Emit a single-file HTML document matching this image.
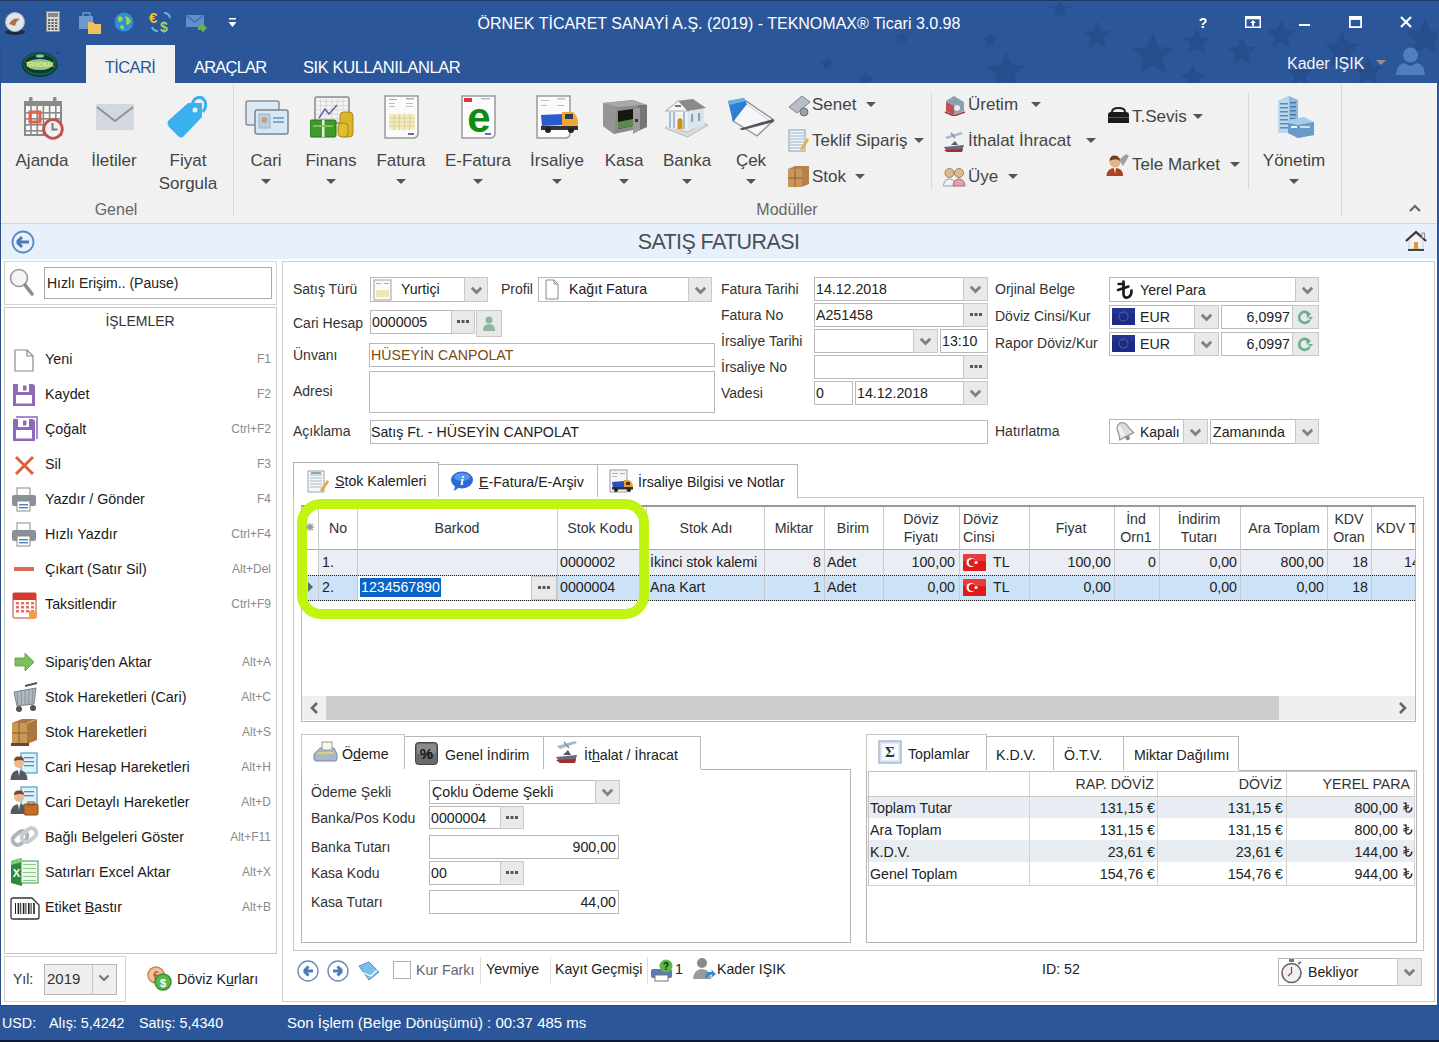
<!DOCTYPE html><html><head><meta charset="utf-8"><style>
html,body{margin:0;padding:0;width:1439px;height:1042px;overflow:hidden;background:#fff;font-family:"Liberation Sans",sans-serif;}
.r{position:absolute;box-sizing:content-box;}
.t{position:absolute;white-space:nowrap;line-height:20px;height:20px;}
</style></head><body>
<div class="r" style="left:0px;top:0px;width:1439px;height:83px;background:#2b579a;"></div>
<div class="r" style="left:0px;top:0px;width:1439px;height:1px;background:#1d3a66;"></div>
<svg class="r" style="left:800px;top:1px" width="637" height="82" viewBox="0 1 637 82"><polygon points="27.0,57.0 28.9,61.5 33.7,61.8 30.0,65.0 31.1,69.7 27.0,67.2 22.9,69.7 24.0,65.0 20.3,61.8 25.1,61.5" fill="#244e8c"/><polygon points="102.0,31.0 103.9,35.5 108.7,35.8 105.0,39.0 106.1,43.7 102.0,41.1 97.9,43.7 99.0,39.0 95.3,35.8 100.1,35.5" fill="#244e8c"/><polygon points="190.0,32.0 192.1,37.1 197.6,37.5 193.4,41.1 194.7,46.5 190.0,43.6 185.3,46.5 186.6,41.1 182.4,37.5 187.9,37.1" fill="#244e8c"/><polygon points="206.0,52.0 211.3,64.7 225.0,65.8 214.6,74.8 217.8,88.2 206.0,81.0 194.2,88.2 197.4,74.8 187.0,65.8 200.7,64.7" fill="#244e8c"/><polygon points="297.0,21.0 301.0,30.5 311.3,31.4 303.4,38.1 305.8,48.1 297.0,42.8 288.2,48.1 290.6,38.1 282.7,31.4 293.0,30.5" fill="#244e8c"/><polygon points="353.0,33.0 358.8,47.0 373.9,48.2 362.4,58.1 365.9,72.8 353.0,64.9 340.1,72.8 343.6,58.1 332.1,48.2 347.2,47.0" fill="#244e8c"/><polygon points="397.0,28.0 400.7,36.9 410.3,37.7 403.0,43.9 405.2,53.3 397.0,48.3 388.8,53.3 391.0,43.9 383.7,37.7 393.3,36.9" fill="#244e8c"/><polygon points="393.0,64.0 396.7,72.9 406.3,73.7 399.0,79.9 401.2,89.3 393.0,84.3 384.8,89.3 387.0,79.9 379.7,73.7 389.3,72.9" fill="#244e8c"/><polygon points="442.0,37.0 446.0,46.5 456.3,47.4 448.4,54.1 450.8,64.1 442.0,58.8 433.2,64.1 435.6,54.1 427.7,47.4 438.0,46.5" fill="#244e8c"/><polygon points="481.0,20.0 485.0,29.5 495.3,30.4 487.4,37.1 489.8,47.1 481.0,41.8 472.2,47.1 474.6,37.1 466.7,30.4 477.0,29.5" fill="#244e8c"/><polygon points="500.0,61.0 503.4,69.3 512.4,70.0 505.6,75.8 507.6,84.5 500.0,79.8 492.4,84.5 494.4,75.8 487.6,70.0 496.6,69.3" fill="#244e8c"/><polygon points="542.0,31.0 547.0,43.1 560.1,44.1 550.1,52.6 553.2,65.4 542.0,58.5 530.8,65.4 533.9,52.6 523.9,44.1 537.0,43.1" fill="#244e8c"/><polygon points="568.0,56.0 572.2,66.2 583.2,67.1 574.8,74.2 577.4,84.9 568.0,79.2 558.6,84.9 561.2,74.2 552.8,67.1 563.8,66.2" fill="#244e8c"/><polygon points="625.0,18.0 630.3,30.7 644.0,31.8 633.6,40.8 636.8,54.2 625.0,47.0 613.2,54.2 616.4,40.8 606.0,31.8 619.7,30.7" fill="#244e8c"/><polygon points="66.0,71.0 68.4,76.7 74.6,77.2 69.9,81.3 71.3,87.3 66.0,84.0 60.7,87.3 62.1,81.3 57.4,77.2 63.6,76.7" fill="#244e8c"/><polygon points="260.0,1.0 262.4,6.7 268.6,7.2 263.9,11.3 265.3,17.3 260.0,14.1 254.7,17.3 256.1,11.3 251.4,7.2 257.6,6.7" fill="#244e8c"/></svg>
<div class="r" style="left:0px;top:83px;width:1439px;height:140px;background:#f1f1f1;"></div>
<div class="r" style="left:0px;top:223px;width:1439px;height:1px;background:#d4d4d4;"></div>
<div class="r" style="left:0px;top:224px;width:1439px;height:35px;background:#e8f1fb;"></div>
<div class="r" style="left:0px;top:260px;width:1439px;height:745px;background:#ffffff;"></div>
<div class="r" style="left:0px;top:45px;width:1px;height:960px;background:#2b4f86;"></div>
<div class="r" style="left:1437px;top:45px;width:2px;height:960px;background:#2b579a;"></div>
<div class="r" style="left:0px;top:1005px;width:1439px;height:37px;background:#2b579a;"></div>
<div class="r" style="left:0px;top:1040px;width:1439px;height:2px;background:#0b1a36;"></div>
<div class="r" style="left:0px;top:1005px;width:1439px;height:1px;background:#2a4a78;"></div>
<div class="t" style="left:419px;width:600px;text-align:center;top:14.0px;font-size:16px;color:#ffffff;">ÖRNEK TİCARET SANAYİ A.Ş. (2019) - TEKNOMAX® Ticari 3.0.98</div>
<div class="r" style="left:86px;top:45px;width:89px;height:38px;background:#f1f1f1;"></div>
<div class="t" style="left:-170px;width:600px;text-align:center;top:57.0px;font-size:16.5px;color:#2b579a;letter-spacing:-0.6px;">TİCARİ</div>
<div class="t" style="left:194px;top:57.0px;font-size:16.5px;color:#ffffff;letter-spacing:-0.8px;">ARAÇLAR</div>
<div class="t" style="left:303px;top:57.0px;font-size:16.5px;color:#ffffff;letter-spacing:-0.4px;">SIK KULLANILANLAR</div>
<div class="t" style="left:1287px;top:53.5px;font-size:16px;color:#f4f4f4;">Kader IŞIK</div>
<div class="r" style="left:233px;top:84px;width:1px;height:132px;background:#d9d9d9;"></div>
<div class="r" style="left:1341px;top:84px;width:1px;height:132px;background:#d9d9d9;"></div>
<div class="r" style="left:931px;top:92px;width:1px;height:97px;background:#d9d9d9;"></div>
<div class="r" style="left:1248px;top:92px;width:1px;height:97px;background:#d9d9d9;"></div>
<div class="t" style="left:-258px;width:600px;text-align:center;top:151.0px;font-size:17px;color:#444444;">Ajanda</div>
<div class="t" style="left:-186px;width:600px;text-align:center;top:151.0px;font-size:17px;color:#444444;">İletiler</div>
<div class="t" style="left:-112px;width:600px;text-align:center;top:151.0px;font-size:17px;color:#444444;">Fiyat</div>
<div class="t" style="left:-34px;width:600px;text-align:center;top:151.0px;font-size:17px;color:#444444;">Cari</div>
<div class="t" style="left:31px;width:600px;text-align:center;top:151.0px;font-size:17px;color:#444444;">Finans</div>
<div class="t" style="left:101px;width:600px;text-align:center;top:151.0px;font-size:17px;color:#444444;">Fatura</div>
<div class="t" style="left:178px;width:600px;text-align:center;top:151.0px;font-size:17px;color:#444444;">E-Fatura</div>
<div class="t" style="left:257px;width:600px;text-align:center;top:151.0px;font-size:17px;color:#444444;">İrsaliye</div>
<div class="t" style="left:324px;width:600px;text-align:center;top:151.0px;font-size:17px;color:#444444;">Kasa</div>
<div class="t" style="left:387px;width:600px;text-align:center;top:151.0px;font-size:17px;color:#444444;">Banka</div>
<div class="t" style="left:451px;width:600px;text-align:center;top:151.0px;font-size:17px;color:#444444;">Çek</div>
<div class="t" style="left:994px;width:600px;text-align:center;top:151.0px;font-size:17px;color:#444444;">Yönetim</div>
<div class="t" style="left:-112px;width:600px;text-align:center;top:174.0px;font-size:17px;color:#444444;">Sorgula</div>
<div class="t" style="left:-184px;width:600px;text-align:center;top:200.0px;font-size:16px;color:#666666;">Genel</div>
<div class="t" style="left:487px;width:600px;text-align:center;top:200.0px;font-size:16px;color:#666666;">Modüller</div>
<div class="t" style="left:812px;top:95.0px;font-size:17px;color:#444444;">Senet</div>
<div class="t" style="left:812px;top:131.0px;font-size:17px;color:#444444;">Teklif Sipariş</div>
<div class="t" style="left:812px;top:167.0px;font-size:17px;color:#444444;">Stok</div>
<div class="t" style="left:968px;top:95.0px;font-size:17px;color:#444444;">Üretim</div>
<div class="t" style="left:968px;top:131.0px;font-size:17px;color:#444444;">İthalat İhracat</div>
<div class="t" style="left:968px;top:167.0px;font-size:17px;color:#444444;">Üye</div>
<div class="t" style="left:1132px;top:107.0px;font-size:17px;color:#444444;">T.Sevis</div>
<div class="t" style="left:1132px;top:155.0px;font-size:17px;color:#444444;">Tele Market</div>
<div class="t" style="left:418.5px;width:600px;text-align:center;top:232.0px;font-size:21.5px;color:#4a4f56;letter-spacing:-0.6px;">SATIŞ FATURASI</div>
<div class="r" style="left:4px;top:261px;width:271px;height:42px;background:#ffffff;border:1px solid #d5d5d5;"></div>
<div class="r" style="left:44px;top:267px;width:226px;height:30px;background:#ffffff;border:1px solid #a9a9a9;"></div>
<div class="t" style="left:47px;top:273.0px;font-size:14px;color:#222;">Hızlı Erişim.. (Pause)</div>
<div class="r" style="left:4px;top:307px;width:271px;height:645px;background:#ffffff;border:1px solid #c9c9c9;"></div>
<div class="t" style="left:-160px;width:600px;text-align:center;top:311.0px;font-size:14px;color:#333;">İŞLEMLER</div>
<div class="t" style="left:45px;top:349.0px;font-size:14.3px;color:#1a1a1a;">Yeni</div>
<div class="t" style="right:1168px;top:349.0px;font-size:12px;color:#8a8a8a;">F1</div>
<div class="t" style="left:45px;top:384.0px;font-size:14.3px;color:#1a1a1a;">Kaydet</div>
<div class="t" style="right:1168px;top:384.0px;font-size:12px;color:#8a8a8a;">F2</div>
<div class="t" style="left:45px;top:419.0px;font-size:14.3px;color:#1a1a1a;">Çoğalt</div>
<div class="t" style="right:1168px;top:419.0px;font-size:12px;color:#8a8a8a;">Ctrl+F2</div>
<div class="t" style="left:45px;top:454.0px;font-size:14.3px;color:#1a1a1a;">Sil</div>
<div class="t" style="right:1168px;top:454.0px;font-size:12px;color:#8a8a8a;">F3</div>
<div class="t" style="left:45px;top:489.0px;font-size:14.3px;color:#1a1a1a;">Yazdır / Gönder</div>
<div class="t" style="right:1168px;top:489.0px;font-size:12px;color:#8a8a8a;">F4</div>
<div class="t" style="left:45px;top:524.0px;font-size:14.3px;color:#1a1a1a;">Hızlı Yazdır</div>
<div class="t" style="right:1168px;top:524.0px;font-size:12px;color:#8a8a8a;">Ctrl+F4</div>
<div class="t" style="left:45px;top:559.0px;font-size:14.3px;color:#1a1a1a;">Çıkart (Satır Sil)</div>
<div class="t" style="right:1168px;top:559.0px;font-size:12px;color:#8a8a8a;">Alt+Del</div>
<div class="t" style="left:45px;top:594.0px;font-size:14.3px;color:#1a1a1a;">Taksitlendir</div>
<div class="t" style="right:1168px;top:594.0px;font-size:12px;color:#8a8a8a;">Ctrl+F9</div>
<div class="t" style="left:45px;top:652.0px;font-size:14.3px;color:#1a1a1a;">Sipariş&#x27;den Aktar</div>
<div class="t" style="right:1168px;top:652.0px;font-size:12px;color:#8a8a8a;">Alt+A</div>
<div class="t" style="left:45px;top:687.0px;font-size:14.3px;color:#1a1a1a;">Stok Hareketleri (Cari)</div>
<div class="t" style="right:1168px;top:687.0px;font-size:12px;color:#8a8a8a;">Alt+C</div>
<div class="t" style="left:45px;top:722.0px;font-size:14.3px;color:#1a1a1a;">Stok Hareketleri</div>
<div class="t" style="right:1168px;top:722.0px;font-size:12px;color:#8a8a8a;">Alt+S</div>
<div class="t" style="left:45px;top:757.0px;font-size:14.3px;color:#1a1a1a;">Cari Hesap Hareketleri</div>
<div class="t" style="right:1168px;top:757.0px;font-size:12px;color:#8a8a8a;">Alt+H</div>
<div class="t" style="left:45px;top:792.0px;font-size:14.3px;color:#1a1a1a;">Cari Detaylı Hareketler</div>
<div class="t" style="right:1168px;top:792.0px;font-size:12px;color:#8a8a8a;">Alt+D</div>
<div class="t" style="left:45px;top:827.0px;font-size:14.3px;color:#1a1a1a;">Bağlı Belgeleri Göster</div>
<div class="t" style="right:1168px;top:827.0px;font-size:12px;color:#8a8a8a;">Alt+F11</div>
<div class="t" style="left:45px;top:862.0px;font-size:14.3px;color:#1a1a1a;">Satırları Excel Aktar</div>
<div class="t" style="right:1168px;top:862.0px;font-size:12px;color:#8a8a8a;">Alt+X</div>
<div class="t" style="left:45px;top:897.0px;font-size:14.3px;color:#1a1a1a;">Etiket <u>B</u>astır</div>
<div class="t" style="right:1168px;top:897.0px;font-size:12px;color:#8a8a8a;">Alt+B</div>
<div class="r" style="left:4px;top:956px;width:120px;height:44px;background:#ffffff;border:1px solid #d5d5d5;"></div>
<div class="t" style="left:13px;top:969.0px;font-size:14px;color:#333;">Yıl:</div>
<div class="r" style="left:44px;top:964px;width:71px;height:29px;background:#eeeeee;border:1px solid #b5b5b5;"></div>
<div class="r" style="left:92px;top:965px;width:1px;height:29px;background:#c8c8c8;"></div>
<div class="t" style="left:47px;top:969.0px;font-size:15px;color:#333;">2019</div>
<div class="t" style="left:177px;top:969.0px;font-size:14.2px;color:#222;">Döviz K<u>u</u>rları</div>
<div class="r" style="left:282px;top:261px;width:1151px;height:739px;background:#ffffff;border:1px solid #d0d0d0;"></div>
<div class="t" style="left:293px;top:279.0px;font-size:14px;color:#333333;">Satış Türü</div>
<div class="t" style="left:293px;top:313.0px;font-size:14px;color:#333333;">Cari Hesap</div>
<div class="t" style="left:293px;top:345.0px;font-size:14px;color:#333333;">Ünvanı</div>
<div class="t" style="left:293px;top:381.0px;font-size:14px;color:#333333;">Adresi</div>
<div class="t" style="left:293px;top:421.0px;font-size:14px;color:#333333;">Açıklama</div>
<div class="t" style="left:501px;top:279.0px;font-size:14px;color:#333333;">Profil</div>
<div class="t" style="left:721px;top:279.0px;font-size:14px;color:#333333;">Fatura Tarihi</div>
<div class="t" style="left:721px;top:305.0px;font-size:14px;color:#333333;">Fatura No</div>
<div class="t" style="left:721px;top:331.0px;font-size:14px;color:#333333;">İrsaliye Tarihi</div>
<div class="t" style="left:721px;top:357.0px;font-size:14px;color:#333333;">İrsaliye No</div>
<div class="t" style="left:721px;top:383.0px;font-size:14px;color:#333333;">Vadesi</div>
<div class="t" style="left:995px;top:279.0px;font-size:14px;color:#333333;">Orjinal Belge</div>
<div class="t" style="left:995px;top:306.0px;font-size:14px;color:#333333;">Döviz Cinsi/Kur</div>
<div class="t" style="left:995px;top:333.0px;font-size:14px;color:#333333;">Rapor Döviz/Kur</div>
<div class="t" style="left:995px;top:421.0px;font-size:14px;color:#333333;">Hatırlatma</div>
<div class="r" style="left:370px;top:277px;width:116px;height:23px;background:#ffffff;border:1px solid #b9b9b9;"></div>
<div class="r" style="left:464px;top:277px;width:22px;height:23px;background:#e9e9e9;border:1px solid #c8c8c8;"></div>
<svg class="r" style="left:469.5px;top:285.5px" width="13" height="9" viewBox="0 0 13 9"><path d="M1.8 1.8 L6.5 6.5 L11.2 1.8" fill="none" stroke="#808080" stroke-width="2.8"/></svg>
<div class="t" style="left:401px;top:279.0px;font-size:14.2px;color:#222;">Yurtiçi</div>
<div class="r" style="left:538px;top:277px;width:172px;height:23px;background:#ffffff;border:1px solid #b9b9b9;"></div>
<div class="r" style="left:688px;top:277px;width:22px;height:23px;background:#e9e9e9;border:1px solid #c8c8c8;"></div>
<svg class="r" style="left:693.5px;top:285.5px" width="13" height="9" viewBox="0 0 13 9"><path d="M1.8 1.8 L6.5 6.5 L11.2 1.8" fill="none" stroke="#808080" stroke-width="2.8"/></svg>
<div class="t" style="left:569px;top:279.0px;font-size:14.2px;color:#222;">Kağıt Fatura</div>
<div class="r" style="left:370px;top:310px;width:103px;height:22px;background:#ffffff;border:1px solid #b9b9b9;"></div>
<div class="r" style="left:451px;top:310px;width:22px;height:22px;background:#e9e9e9;border:1px solid #c8c8c8;"></div>
<svg class="r" style="left:457.0px;top:320.0px" width="12" height="4" viewBox="0 0 12 4"><rect x="0" y="0" width="3" height="3" fill="#555"/><rect x="4.5" y="0" width="3" height="3" fill="#555"/><rect x="9" y="0" width="3" height="3" fill="#555"/></svg>
<div class="t" style="left:372px;top:312.0px;font-size:14.2px;color:#222;">0000005</div>
<div class="r" style="left:476px;top:310px;width:24px;height:25px;background:#e9e9e9;border:1px solid #c8c8c8;"></div>
<div class="r" style="left:369px;top:343px;width:344px;height:22px;background:#ffffff;border:1px solid #b9b9b9;"></div>
<div class="t" style="left:371px;top:345.0px;font-size:14.2px;color:#7a4a12;">HÜSEYİN CANPOLAT</div>
<div class="r" style="left:369px;top:371px;width:344px;height:40px;background:#ffffff;border:1px solid #b9b9b9;"></div>
<div class="r" style="left:370px;top:420px;width:616px;height:22px;background:#ffffff;border:1px solid #b9b9b9;"></div>
<div class="t" style="left:371px;top:422.0px;font-size:14.2px;color:#222;">Satış Ft. - HÜSEYİN CANPOLAT</div>
<div class="r" style="left:814px;top:277px;width:172px;height:22px;background:#ffffff;border:1px solid #b9b9b9;"></div>
<div class="r" style="left:963px;top:277px;width:23px;height:22px;background:#e9e9e9;border:1px solid #c8c8c8;"></div>
<svg class="r" style="left:969.0px;top:285.0px" width="13" height="9" viewBox="0 0 13 9"><path d="M1.8 1.8 L6.5 6.5 L11.2 1.8" fill="none" stroke="#808080" stroke-width="2.8"/></svg>
<div class="t" style="left:816px;top:279.0px;font-size:14.2px;color:#222;">14.12.2018</div>
<div class="r" style="left:814px;top:303px;width:172px;height:22px;background:#ffffff;border:1px solid #b9b9b9;"></div>
<div class="r" style="left:963px;top:303px;width:23px;height:22px;background:#e9e9e9;border:1px solid #c8c8c8;"></div>
<svg class="r" style="left:969.5px;top:313.0px" width="12" height="4" viewBox="0 0 12 4"><rect x="0" y="0" width="3" height="3" fill="#555"/><rect x="4.5" y="0" width="3" height="3" fill="#555"/><rect x="9" y="0" width="3" height="3" fill="#555"/></svg>
<div class="t" style="left:816px;top:305.0px;font-size:14.2px;color:#222;">A251458</div>
<div class="r" style="left:814px;top:329px;width:122px;height:22px;background:#ffffff;border:1px solid #b9b9b9;"></div>
<div class="r" style="left:913px;top:329px;width:23px;height:22px;background:#e9e9e9;border:1px solid #c8c8c8;"></div>
<svg class="r" style="left:919.0px;top:337.0px" width="13" height="9" viewBox="0 0 13 9"><path d="M1.8 1.8 L6.5 6.5 L11.2 1.8" fill="none" stroke="#808080" stroke-width="2.8"/></svg>
<div class="r" style="left:940px;top:329px;width:46px;height:22px;background:#ffffff;border:1px solid #b9b9b9;"></div>
<div class="t" style="left:942px;top:331.0px;font-size:14.2px;color:#222;">13:10</div>
<div class="r" style="left:814px;top:355px;width:172px;height:22px;background:#ffffff;border:1px solid #b9b9b9;"></div>
<div class="r" style="left:963px;top:355px;width:23px;height:22px;background:#e9e9e9;border:1px solid #c8c8c8;"></div>
<svg class="r" style="left:969.5px;top:365.0px" width="12" height="4" viewBox="0 0 12 4"><rect x="0" y="0" width="3" height="3" fill="#555"/><rect x="4.5" y="0" width="3" height="3" fill="#555"/><rect x="9" y="0" width="3" height="3" fill="#555"/></svg>
<div class="r" style="left:814px;top:381px;width:37px;height:22px;background:#ffffff;border:1px solid #b9b9b9;"></div>
<div class="t" style="left:816px;top:383.0px;font-size:14.2px;color:#222;">0</div>
<div class="r" style="left:855px;top:381px;width:131px;height:22px;background:#ffffff;border:1px solid #b9b9b9;"></div>
<div class="r" style="left:963px;top:381px;width:23px;height:22px;background:#e9e9e9;border:1px solid #c8c8c8;"></div>
<svg class="r" style="left:969.0px;top:389.0px" width="13" height="9" viewBox="0 0 13 9"><path d="M1.8 1.8 L6.5 6.5 L11.2 1.8" fill="none" stroke="#808080" stroke-width="2.8"/></svg>
<div class="t" style="left:857px;top:383.0px;font-size:14.2px;color:#222;">14.12.2018</div>
<div class="r" style="left:1109px;top:277px;width:208px;height:23px;background:#ffffff;border:1px solid #b9b9b9;"></div>
<div class="r" style="left:1295px;top:277px;width:22px;height:23px;background:#e9e9e9;border:1px solid #c8c8c8;"></div>
<svg class="r" style="left:1300.5px;top:285.5px" width="13" height="9" viewBox="0 0 13 9"><path d="M1.8 1.8 L6.5 6.5 L11.2 1.8" fill="none" stroke="#808080" stroke-width="2.8"/></svg>
<div class="t" style="left:1140px;top:280.0px;font-size:14.2px;color:#222;">Yerel Para</div>
<div class="r" style="left:1109px;top:305px;width:108px;height:22px;background:#ffffff;border:1px solid #b9b9b9;"></div>
<div class="r" style="left:1194px;top:305px;width:23px;height:22px;background:#e9e9e9;border:1px solid #c8c8c8;"></div>
<svg class="r" style="left:1200.0px;top:313.0px" width="13" height="9" viewBox="0 0 13 9"><path d="M1.8 1.8 L6.5 6.5 L11.2 1.8" fill="none" stroke="#808080" stroke-width="2.8"/></svg>
<div class="t" style="left:1140px;top:307.0px;font-size:14.2px;color:#222;">EUR</div>
<div class="r" style="left:1221px;top:305px;width:96px;height:22px;background:#ffffff;border:1px solid #b9b9b9;"></div>
<div class="r" style="left:1292px;top:305px;width:25px;height:22px;background:#e9e9e9;border:1px solid #c8c8c8;"></div>
<div class="t" style="right:149px;top:307.0px;font-size:14.2px;color:#222;">6,0997</div>
<div class="r" style="left:1109px;top:332px;width:108px;height:22px;background:#ffffff;border:1px solid #b9b9b9;"></div>
<div class="r" style="left:1194px;top:332px;width:23px;height:22px;background:#e9e9e9;border:1px solid #c8c8c8;"></div>
<svg class="r" style="left:1200.0px;top:340.0px" width="13" height="9" viewBox="0 0 13 9"><path d="M1.8 1.8 L6.5 6.5 L11.2 1.8" fill="none" stroke="#808080" stroke-width="2.8"/></svg>
<div class="t" style="left:1140px;top:334.0px;font-size:14.2px;color:#222;">EUR</div>
<div class="r" style="left:1221px;top:332px;width:96px;height:22px;background:#ffffff;border:1px solid #b9b9b9;"></div>
<div class="r" style="left:1292px;top:332px;width:25px;height:22px;background:#e9e9e9;border:1px solid #c8c8c8;"></div>
<div class="t" style="right:149px;top:334.0px;font-size:14.2px;color:#222;">6,0997</div>
<div class="r" style="left:1109px;top:419px;width:97px;height:23px;background:#ffffff;border:1px solid #b9b9b9;"></div>
<div class="r" style="left:1183px;top:419px;width:23px;height:23px;background:#e9e9e9;border:1px solid #c8c8c8;"></div>
<svg class="r" style="left:1189.0px;top:427.5px" width="13" height="9" viewBox="0 0 13 9"><path d="M1.8 1.8 L6.5 6.5 L11.2 1.8" fill="none" stroke="#808080" stroke-width="2.8"/></svg>
<div class="t" style="left:1140px;top:422.0px;font-size:14px;color:#222;">Kapalı</div>
<div class="r" style="left:1210px;top:419px;width:107px;height:23px;background:#ffffff;border:1px solid #b9b9b9;"></div>
<div class="r" style="left:1295px;top:419px;width:22px;height:23px;background:#e9e9e9;border:1px solid #c8c8c8;"></div>
<svg class="r" style="left:1300.5px;top:427.5px" width="13" height="9" viewBox="0 0 13 9"><path d="M1.8 1.8 L6.5 6.5 L11.2 1.8" fill="none" stroke="#808080" stroke-width="2.8"/></svg>
<div class="t" style="left:1213px;top:422.0px;font-size:14.2px;color:#222;">Zamanında</div>
<div class="r" style="left:293px;top:497px;width:1129px;height:452px;background:#ffffff;border:1px solid #c6c6c6;"></div>
<div class="r" style="left:293px;top:462px;width:144px;height:34px;background:#ffffff;border:1px solid #b0b0b0;border-bottom:none;height:35px;"></div>
<div class="r" style="left:438px;top:464px;width:158px;height:32px;background:#ffffff;border:1px solid #b8b8b8;"></div>
<div class="r" style="left:597px;top:464px;width:199px;height:32px;background:#ffffff;border:1px solid #b8b8b8;"></div>
<div class="r" style="left:294px;top:497px;width:503px;height:1px;background:#ffffff;"></div>
<div class="r" style="left:294px;top:496px;width:144px;height:3px;background:#ffffff;"></div>
<div class="t" style="left:335px;top:471.0px;font-size:14.2px;color:#222;"><u>S</u>tok Kalemleri</div>
<div class="t" style="left:479px;top:472.0px;font-size:14.2px;color:#222;"><u>E</u>-Fatura/E-Arşiv</div>
<div class="t" style="left:638px;top:472.0px;font-size:14.2px;color:#222;">İrsaliye Bilgisi ve Notlar</div>
<div class="r" style="left:301px;top:505px;width:1113px;height:214px;background:#ffffff;border:1px solid #b8b8b8;border-top:2px solid #9a9a9a;"></div>
<div class="r" style="left:318px;top:549px;width:1097px;height:26px;background:#eaedf3;"></div>
<div class="r" style="left:302px;top:575px;width:1113px;height:25px;background:#cce3f7;"></div>
<div class="r" style="left:302px;top:549px;width:1113px;height:1px;background:#a9a9a9;"></div>
<div class="r" style="left:318px;top:507px;width:1px;height:93px;background:#c9c9c9;"></div>
<div class="r" style="left:357px;top:507px;width:1px;height:93px;background:#c9c9c9;"></div>
<div class="r" style="left:557px;top:507px;width:1px;height:93px;background:#c9c9c9;"></div>
<div class="r" style="left:646px;top:507px;width:1px;height:93px;background:#c9c9c9;"></div>
<div class="r" style="left:764px;top:507px;width:1px;height:93px;background:#c9c9c9;"></div>
<div class="r" style="left:824px;top:507px;width:1px;height:93px;background:#c9c9c9;"></div>
<div class="r" style="left:883px;top:507px;width:1px;height:93px;background:#c9c9c9;"></div>
<div class="r" style="left:959px;top:507px;width:1px;height:93px;background:#c9c9c9;"></div>
<div class="r" style="left:1029px;top:507px;width:1px;height:93px;background:#c9c9c9;"></div>
<div class="r" style="left:1114px;top:507px;width:1px;height:93px;background:#c9c9c9;"></div>
<div class="r" style="left:1159px;top:507px;width:1px;height:93px;background:#c9c9c9;"></div>
<div class="r" style="left:1240px;top:507px;width:1px;height:93px;background:#c9c9c9;"></div>
<div class="r" style="left:1327px;top:507px;width:1px;height:93px;background:#c9c9c9;"></div>
<div class="r" style="left:1371px;top:507px;width:1px;height:93px;background:#c9c9c9;"></div>
<div class="r" style="left:302px;top:600px;width:1113px;height:1px;background:#9a9a9a;background:repeating-linear-gradient(90deg,#222 0 1px,#c8dcf0 1px 2px);"></div>
<div class="r" style="left:302px;top:575px;width:1113px;height:1px;background:#9a9a9a;background:repeating-linear-gradient(90deg,#222 0 1px,#c8dcf0 1px 2px);"></div>
<div class="t" style="left:38px;width:600px;text-align:center;top:518.0px;font-size:14.2px;color:#333;">No</div>
<div class="t" style="left:157px;width:600px;text-align:center;top:518.0px;font-size:14.2px;color:#333;">Barkod</div>
<div class="t" style="left:300px;width:600px;text-align:center;top:518.0px;font-size:14.2px;color:#333;">Stok Kodu</div>
<div class="t" style="left:406px;width:600px;text-align:center;top:518.0px;font-size:14.2px;color:#333;">Stok Adı</div>
<div class="t" style="left:494px;width:600px;text-align:center;top:518.0px;font-size:14.2px;color:#333;">Miktar</div>
<div class="t" style="left:553px;width:600px;text-align:center;top:518.0px;font-size:14.2px;color:#333;">Birim</div>
<div class="t" style="left:771px;width:600px;text-align:center;top:518.0px;font-size:14.2px;color:#333;">Fiyat</div>
<div class="t" style="left:984px;width:600px;text-align:center;top:518.0px;font-size:14.2px;color:#333;">Ara Toplam</div>
<div class="t" style="left:621px;width:600px;text-align:center;top:509.0px;font-size:14.2px;color:#333;">Döviz</div>
<div class="t" style="left:621px;width:600px;text-align:center;top:527.0px;font-size:14.2px;color:#333;">Fiyatı</div>
<div class="t" style="left:836px;width:600px;text-align:center;top:509.0px;font-size:14.2px;color:#333;">İnd</div>
<div class="t" style="left:836px;width:600px;text-align:center;top:527.0px;font-size:14.2px;color:#333;">Orn1</div>
<div class="t" style="left:899px;width:600px;text-align:center;top:509.0px;font-size:14.2px;color:#333;">İndirim</div>
<div class="t" style="left:899px;width:600px;text-align:center;top:527.0px;font-size:14.2px;color:#333;">Tutarı</div>
<div class="t" style="left:1049px;width:600px;text-align:center;top:509.0px;font-size:14.2px;color:#333;">KDV</div>
<div class="t" style="left:1049px;width:600px;text-align:center;top:527.0px;font-size:14.2px;color:#333;">Oran</div>
<div class="t" style="left:963px;top:509.0px;font-size:14.2px;color:#333;">Döviz</div>
<div class="t" style="left:963px;top:527.0px;font-size:14.2px;color:#333;">Cinsi</div>
<div class="r" style="left:1372px;top:507px;width:43px;height:93px;overflow:hidden"><div class="t" style="left:4px;top:11px;font-size:14.2px;color:#333">KDV T</div><div class="t" style="left:32px;top:45px;font-size:14.2px;color:#222">14</div></div>
<div class="t" style="left:322px;top:552.0px;font-size:14.2px;color:#222;">1.</div>
<div class="t" style="left:560px;top:552.0px;font-size:14.2px;color:#222;">0000002</div>
<div class="t" style="left:650px;top:552.0px;font-size:14.2px;color:#222;">İkinci stok kalemi</div>
<div class="t" style="right:618px;top:552.0px;font-size:14.2px;color:#222;">8</div>
<div class="t" style="left:827px;top:552.0px;font-size:14.2px;color:#222;">Adet</div>
<div class="t" style="right:484px;top:552.0px;font-size:14.2px;color:#222;">100,00</div>
<div class="t" style="left:993px;top:552.0px;font-size:14.2px;color:#222;">TL</div>
<div class="t" style="right:328px;top:552.0px;font-size:14.2px;color:#222;">100,00</div>
<div class="t" style="right:283px;top:552.0px;font-size:14.2px;color:#222;">0</div>
<div class="t" style="right:202px;top:552.0px;font-size:14.2px;color:#222;">0,00</div>
<div class="t" style="right:115px;top:552.0px;font-size:14.2px;color:#222;">800,00</div>
<div class="t" style="right:71px;top:552.0px;font-size:14.2px;color:#222;">18</div>
<div class="t" style="left:322px;top:577.0px;font-size:14.2px;color:#222;">2.</div>
<div class="t" style="left:560px;top:577.0px;font-size:14.2px;color:#222;">0000004</div>
<div class="t" style="left:650px;top:577.0px;font-size:14.2px;color:#222;">Ana Kart</div>
<div class="t" style="right:618px;top:577.0px;font-size:14.2px;color:#222;">1</div>
<div class="t" style="left:827px;top:577.0px;font-size:14.2px;color:#222;">Adet</div>
<div class="t" style="right:484px;top:577.0px;font-size:14.2px;color:#222;">0,00</div>
<div class="t" style="left:993px;top:577.0px;font-size:14.2px;color:#222;">TL</div>
<div class="t" style="right:328px;top:577.0px;font-size:14.2px;color:#222;">0,00</div>
<div class="t" style="right:283px;top:577.0px;font-size:14.2px;color:#222;"></div>
<div class="t" style="right:202px;top:577.0px;font-size:14.2px;color:#222;">0,00</div>
<div class="t" style="right:115px;top:577.0px;font-size:14.2px;color:#222;">0,00</div>
<div class="t" style="right:71px;top:577.0px;font-size:14.2px;color:#222;">18</div>
<div class="r" style="left:358px;top:576px;width:199px;height:24px;background:#ffffff;"></div>
<div class="r" style="left:531px;top:576px;width:24px;height:22px;background:#e9e9e9;border:1px solid #c8c8c8;"></div>
<svg class="r" style="left:538.0px;top:586.0px" width="12" height="4" viewBox="0 0 12 4"><rect x="0" y="0" width="3" height="3" fill="#555"/><rect x="4.5" y="0" width="3" height="3" fill="#555"/><rect x="9" y="0" width="3" height="3" fill="#555"/></svg>
<div class="r" style="left:360px;top:578px;width:81px;height:19px;background:#0a64c8;"></div>
<div class="t" style="left:361px;top:577.0px;font-size:14.2px;color:#ffffff;">1234567890</div>
<div class="r" style="left:302px;top:696px;width:1113px;height:24px;background:#efefef;"></div>
<div class="r" style="left:326px;top:696px;width:953px;height:24px;background:#cdcdcd;"></div>
<svg class="r" style="left:309px;top:702px" width="10" height="12" viewBox="0 0 10 12"><path d="M8 1 L3 6 L8 11" fill="none" stroke="#666" stroke-width="2.6"/></svg>
<svg class="r" style="left:1398px;top:702px" width="10" height="12" viewBox="0 0 10 12"><path d="M2 1 L7 6 L2 11" fill="none" stroke="#666" stroke-width="2.6"/></svg>
<div class="r" style="left:297px;top:499px;width:332px;height:100px;border:10px solid #c0f511;border-radius:24px;"></div>
<div class="r" style="left:301px;top:769px;width:548px;height:172px;background:#ffffff;border:1px solid #b4b4b4;"></div>
<div class="r" style="left:301px;top:734px;width:102px;height:34px;background:#ffffff;border:1px solid #c6c6c6;border-bottom:none;height:35px;"></div>
<div class="r" style="left:404px;top:736px;width:138px;height:32px;background:#ffffff;border:1px solid #b8b8b8;"></div>
<div class="r" style="left:543px;top:736px;width:156px;height:32px;background:#ffffff;border:1px solid #b8b8b8;"></div>
<div class="r" style="left:302px;top:769px;width:399px;height:1px;background:#ffffff;"></div>
<div class="t" style="left:342px;top:744.0px;font-size:14.2px;color:#222;">Ö<u>d</u>eme</div>
<div class="t" style="left:445px;top:745.0px;font-size:14.2px;color:#222;">Genel İndirim</div>
<div class="t" style="left:584px;top:745.0px;font-size:14.2px;color:#222;">İt<u>h</u>alat / İhracat</div>
<div class="t" style="left:311px;top:782.0px;font-size:14px;color:#333333;">Ödeme Şekli</div>
<div class="t" style="left:311px;top:808.0px;font-size:14px;color:#333333;">Banka/Pos Kodu</div>
<div class="t" style="left:311px;top:837.0px;font-size:14px;color:#333333;">Banka Tutarı</div>
<div class="t" style="left:311px;top:863.0px;font-size:14px;color:#333333;">Kasa Kodu</div>
<div class="t" style="left:311px;top:892.0px;font-size:14px;color:#333333;">Kasa Tutarı</div>
<div class="r" style="left:429px;top:780px;width:189px;height:22px;background:#ffffff;border:1px solid #b9b9b9;"></div>
<div class="r" style="left:595px;top:780px;width:23px;height:22px;background:#e9e9e9;border:1px solid #c8c8c8;"></div>
<svg class="r" style="left:601.0px;top:788.0px" width="13" height="9" viewBox="0 0 13 9"><path d="M1.8 1.8 L6.5 6.5 L11.2 1.8" fill="none" stroke="#808080" stroke-width="2.8"/></svg>
<div class="t" style="left:432px;top:782.0px;font-size:14.2px;color:#222;">Çoklu Ödeme Şekli</div>
<div class="r" style="left:429px;top:806px;width:93px;height:21px;background:#ffffff;border:1px solid #b9b9b9;"></div>
<div class="r" style="left:500px;top:806px;width:22px;height:21px;background:#e9e9e9;border:1px solid #c8c8c8;"></div>
<svg class="r" style="left:506.0px;top:815.5px" width="12" height="4" viewBox="0 0 12 4"><rect x="0" y="0" width="3" height="3" fill="#555"/><rect x="4.5" y="0" width="3" height="3" fill="#555"/><rect x="9" y="0" width="3" height="3" fill="#555"/></svg>
<div class="t" style="left:431px;top:808.0px;font-size:14.2px;color:#222;">0000004</div>
<div class="r" style="left:429px;top:835px;width:188px;height:22px;background:#ffffff;border:1px solid #b9b9b9;"></div>
<div class="t" style="right:823px;top:837.0px;font-size:14.2px;color:#222;">900,00</div>
<div class="r" style="left:429px;top:861px;width:93px;height:22px;background:#ffffff;border:1px solid #b9b9b9;"></div>
<div class="r" style="left:500px;top:861px;width:22px;height:22px;background:#e9e9e9;border:1px solid #c8c8c8;"></div>
<svg class="r" style="left:506.0px;top:871.0px" width="12" height="4" viewBox="0 0 12 4"><rect x="0" y="0" width="3" height="3" fill="#555"/><rect x="4.5" y="0" width="3" height="3" fill="#555"/><rect x="9" y="0" width="3" height="3" fill="#555"/></svg>
<div class="t" style="left:431px;top:863.0px;font-size:14.2px;color:#222;">00</div>
<div class="r" style="left:429px;top:890px;width:188px;height:22px;background:#ffffff;border:1px solid #b9b9b9;"></div>
<div class="t" style="right:823px;top:892.0px;font-size:14.2px;color:#222;">44,00</div>
<div class="r" style="left:866px;top:770px;width:549px;height:171px;background:#ffffff;border:1px solid #b4b4b4;"></div>
<div class="r" style="left:866px;top:734px;width:119px;height:35px;background:#ffffff;border:1px solid #c6c6c6;border-bottom:none;height:36px;"></div>
<div class="r" style="left:986px;top:736px;width:66px;height:33px;background:#ffffff;border:1px solid #b8b8b8;"></div>
<div class="r" style="left:1053px;top:736px;width:69px;height:33px;background:#ffffff;border:1px solid #b8b8b8;"></div>
<div class="r" style="left:1123px;top:736px;width:114px;height:33px;background:#ffffff;border:1px solid #b8b8b8;"></div>
<div class="r" style="left:867px;top:770px;width:372px;height:1px;background:#ffffff;"></div>
<div class="t" style="left:908px;top:744.0px;font-size:14.2px;color:#222;">Toplamlar</div>
<div class="t" style="left:996px;top:745.0px;font-size:14.2px;color:#222;">K.D.V.</div>
<div class="t" style="left:1064px;top:745.0px;font-size:14.2px;color:#222;">Ö.T.V.</div>
<div class="t" style="left:1134px;top:745.0px;font-size:14.2px;color:#222;">Miktar Dağılımı</div>
<div class="r" style="left:868px;top:771px;width:547px;height:26px;background:#ffffff;"></div>
<div class="r" style="left:867px;top:796px;width:548px;height:1px;background:#c9c9c9;"></div>
<div class="r" style="left:867px;top:797px;width:548px;height:21px;background:#e8ecf3;"></div>
<div class="r" style="left:867px;top:840px;width:548px;height:22px;background:#e8ecf3;"></div>
<div class="r" style="left:867px;top:885px;width:548px;height:1px;background:#cfcfcf;"></div>
<div class="r" style="left:1029px;top:771px;width:1px;height:114px;background:#d2d2d2;"></div>
<div class="r" style="left:1157px;top:771px;width:1px;height:114px;background:#d2d2d2;"></div>
<div class="r" style="left:1286px;top:771px;width:1px;height:114px;background:#d2d2d2;"></div>
<div class="r" style="left:1414px;top:771px;width:1px;height:114px;background:#d2d2d2;"></div>
<div class="r" style="left:868px;top:771px;width:1px;height:115px;background:#c4c4c4;"></div>
<div class="r" style="left:868px;top:771px;width:547px;height:1px;background:#c4c4c4;"></div>
<div class="t" style="right:285px;top:774.0px;font-size:14.2px;color:#333;">RAP. DÖVİZ</div>
<div class="t" style="right:157px;top:774.0px;font-size:14.2px;color:#333;">DÖVİZ</div>
<div class="t" style="right:29px;top:774.0px;font-size:14.2px;color:#333;">YEREL PARA</div>
<div class="t" style="left:870px;top:798.0px;font-size:14.2px;color:#222;">Toplam Tutar</div>
<div class="t" style="right:284px;top:798.0px;font-size:14.2px;color:#222;">131,15 €</div>
<div class="t" style="right:156px;top:798.0px;font-size:14.2px;color:#222;">131,15 €</div>
<div class="t" style="right:41px;top:798.0px;font-size:14.2px;color:#222;">800,00</div>
<svg class="r" style="left:1401.5px;top:801px" width="11" height="13" viewBox="0 0 11 13"><path d="M4 1.5 V9 Q4 11.5 6.8 11 Q9.8 10.2 9.8 6.5" fill="none" stroke="#2a2a2a" stroke-width="1.4"/><path d="M1.5 2.2 H4 M1.3 6.3 L7 4.3 M1.3 8.3 L7 6.3" fill="none" stroke="#2a2a2a" stroke-width="1.2"/></svg>
<div class="t" style="left:870px;top:820.0px;font-size:14.2px;color:#222;">Ara Toplam</div>
<div class="t" style="right:284px;top:820.0px;font-size:14.2px;color:#222;">131,15 €</div>
<div class="t" style="right:156px;top:820.0px;font-size:14.2px;color:#222;">131,15 €</div>
<div class="t" style="right:41px;top:820.0px;font-size:14.2px;color:#222;">800,00</div>
<svg class="r" style="left:1401.5px;top:823px" width="11" height="13" viewBox="0 0 11 13"><path d="M4 1.5 V9 Q4 11.5 6.8 11 Q9.8 10.2 9.8 6.5" fill="none" stroke="#2a2a2a" stroke-width="1.4"/><path d="M1.5 2.2 H4 M1.3 6.3 L7 4.3 M1.3 8.3 L7 6.3" fill="none" stroke="#2a2a2a" stroke-width="1.2"/></svg>
<div class="t" style="left:870px;top:842.0px;font-size:14.2px;color:#222;">K.D.V.</div>
<div class="t" style="right:284px;top:842.0px;font-size:14.2px;color:#222;">23,61 €</div>
<div class="t" style="right:156px;top:842.0px;font-size:14.2px;color:#222;">23,61 €</div>
<div class="t" style="right:41px;top:842.0px;font-size:14.2px;color:#222;">144,00</div>
<svg class="r" style="left:1401.5px;top:845px" width="11" height="13" viewBox="0 0 11 13"><path d="M4 1.5 V9 Q4 11.5 6.8 11 Q9.8 10.2 9.8 6.5" fill="none" stroke="#2a2a2a" stroke-width="1.4"/><path d="M1.5 2.2 H4 M1.3 6.3 L7 4.3 M1.3 8.3 L7 6.3" fill="none" stroke="#2a2a2a" stroke-width="1.2"/></svg>
<div class="t" style="left:870px;top:864.0px;font-size:14.2px;color:#222;">Genel Toplam</div>
<div class="t" style="right:284px;top:864.0px;font-size:14.2px;color:#222;">154,76 €</div>
<div class="t" style="right:156px;top:864.0px;font-size:14.2px;color:#222;">154,76 €</div>
<div class="t" style="right:41px;top:864.0px;font-size:14.2px;color:#222;">944,00</div>
<svg class="r" style="left:1401.5px;top:867px" width="11" height="13" viewBox="0 0 11 13"><path d="M4 1.5 V9 Q4 11.5 6.8 11 Q9.8 10.2 9.8 6.5" fill="none" stroke="#2a2a2a" stroke-width="1.4"/><path d="M1.5 2.2 H4 M1.3 6.3 L7 4.3 M1.3 8.3 L7 6.3" fill="none" stroke="#2a2a2a" stroke-width="1.2"/></svg>
<div class="r" style="left:393px;top:961px;width:16px;height:16px;background:#ffffff;border:1px solid #b0b0b0;"></div>
<div class="t" style="left:416px;top:960.0px;font-size:14.2px;color:#666;">Kur Farkı</div>
<div class="r" style="left:480px;top:957px;width:1px;height:27px;background:#dddddd;"></div>
<div class="t" style="left:486px;top:959.0px;font-size:14.2px;color:#222;">Yevmiye</div>
<div class="r" style="left:550px;top:957px;width:1px;height:27px;background:#dddddd;"></div>
<div class="t" style="left:555px;top:959.0px;font-size:14.2px;color:#222;">Kayıt Geçmişi</div>
<div class="r" style="left:647px;top:957px;width:1px;height:27px;background:#dddddd;"></div>
<div class="t" style="left:675px;top:959.0px;font-size:14.2px;color:#222;">1</div>
<div class="t" style="left:717px;top:959.0px;font-size:14.2px;color:#222;">Kader IŞIK</div>
<div class="t" style="left:1042px;top:959.0px;font-size:14.2px;color:#222;">ID: 52</div>
<div class="r" style="left:1278px;top:958px;width:142px;height:26px;background:#ffffff;border:1px solid #b9b9b9;"></div>
<div class="r" style="left:1397px;top:958px;width:23px;height:26px;background:#e9e9e9;border:1px solid #c8c8c8;"></div>
<svg class="r" style="left:1403.0px;top:968.0px" width="13" height="9" viewBox="0 0 13 9"><path d="M1.8 1.8 L6.5 6.5 L11.2 1.8" fill="none" stroke="#808080" stroke-width="2.8"/></svg>
<div class="t" style="left:1308px;top:962.0px;font-size:14.2px;color:#222;">Bekliyor</div>
<div class="t" style="left:2px;top:1013.0px;font-size:14.3px;color:#ffffff;">USD:</div>
<div class="t" style="left:49px;top:1013.0px;font-size:14.3px;color:#ffffff;">Alış: 5,4242</div>
<div class="t" style="left:139px;top:1013.0px;font-size:14.3px;color:#ffffff;">Satış: 5,4340</div>
<div class="t" style="left:287px;top:1013.0px;font-size:15px;color:#ffffff;">Son İşlem (Belge Dönüşümü) : 00:37 485 ms</div>
<svg class="r" style="left:4px;top:11px" width="22" height="24" viewBox="0 0 22 24"><ellipse cx="11" cy="21" rx="10" ry="3" fill="#1b2b44"/><circle cx="11" cy="11" r="9.5" fill="#dfe8e8"/><circle cx="11" cy="11" r="9.5" fill="none" stroke="#9fb7bd" stroke-width="1"/><path d="M5 13 Q9 6 16 8 Q12 10 11 15 Z" fill="#b06e4a"/></svg>
<svg class="r" style="left:46px;top:11px" width="14" height="21" viewBox="0 0 14 21"><rect x="0.5" y="0.5" width="13" height="20" fill="#d8d8d8" stroke="#8d8d8d"/><rect x="2" y="2" width="10" height="4" fill="#888"/><rect x="2.0" y="8" width="2.3" height="2" fill="#666"/><rect x="2.0" y="11" width="2.3" height="2" fill="#666"/><rect x="2.0" y="14" width="2.3" height="2" fill="#666"/><rect x="2.0" y="17" width="2.3" height="2" fill="#666"/><rect x="5.5" y="8" width="2.3" height="2" fill="#666"/><rect x="5.5" y="11" width="2.3" height="2" fill="#666"/><rect x="5.5" y="14" width="2.3" height="2" fill="#666"/><rect x="5.5" y="17" width="2.3" height="2" fill="#666"/><rect x="9.0" y="8" width="2.3" height="2" fill="#666"/><rect x="9.0" y="11" width="2.3" height="2" fill="#666"/><rect x="9.0" y="14" width="2.3" height="2" fill="#666"/><rect x="9.0" y="17" width="2.3" height="2" fill="#666"/></svg>
<svg class="r" style="left:79px;top:12px" width="22" height="22" viewBox="0 0 22 22"><rect x="0" y="4" width="14" height="13" rx="1" fill="#6a9bd1"/><rect x="4" y="1" width="7" height="4" fill="none" stroke="#6a9bd1" stroke-width="1.5"/><path d="M9 10 h5 l2 2 h6 v10 h-13 z" fill="#f0c060"/></svg>
<svg class="r" style="left:114px;top:12px" width="20" height="20" viewBox="0 0 20 20"><circle cx="10" cy="10" r="9.5" fill="#2f8fd6"/><path d="M4 5 Q8 3 9 7 Q7 11 5 10 Q3 8 4 5Z M11 4 Q16 5 17 10 Q14 14 12 12 Q13 8 11 4Z M7 13 Q10 13 10 17 Q7 18 6 15Z" fill="#a8cf45"/></svg>
<svg class="r" style="left:149px;top:10px" width="24" height="24" viewBox="0 0 24 24"><text x="0" y="13" font-family="Liberation Sans" font-weight="bold" font-size="15" fill="#f2c12e">€</text><text x="11" y="22" font-family="Liberation Sans" font-weight="bold" font-size="14" fill="#9fd36a">$</text><path d="M15 3 q5 0 6 5" fill="none" stroke="#6fb3e8" stroke-width="2"/><path d="M3 17 q1 4 6 4" fill="none" stroke="#6fb3e8" stroke-width="2"/></svg>
<svg class="r" style="left:186px;top:14px" width="22" height="18" viewBox="0 0 22 18"><rect x="0" y="1" width="18" height="12" fill="#5f8fcf"/><path d="M0 1 L9 8 L18 1" fill="none" stroke="#3f6fb0" stroke-width="1.5"/><path d="M12 12 h4 v-3 l5 5 l-5 5 v-3 h-4z" fill="#6ab04c"/></svg>
<svg class="r" style="left:228px;top:18px" width="9" height="10" viewBox="0 0 9 10"><rect x="1" y="0" width="7" height="1.5" fill="#fff"/><path d="M0.5 4 h8 l-4 5z" fill="#fff"/></svg>
<svg class="r" style="left:20px;top:50px" width="42" height="30" viewBox="0 0 42 30"><ellipse cx="19.7" cy="14.5" rx="18" ry="12.5" fill="#0b2f4a"/><ellipse cx="19.7" cy="14" rx="17" ry="11.5" fill="#136030"/><ellipse cx="19.7" cy="14" rx="15" ry="9.5" fill="#0d3a36"/><ellipse cx="19.7" cy="14.5" rx="13" ry="5.5" fill="#8fc4a0"/><text x="19.7" y="17" text-anchor="middle" font-family="Liberation Sans" font-size="6.5" font-weight="bold" fill="#e4f060" textLength="28" lengthAdjust="spacingAndGlyphs">TEKNOMAX</text><ellipse cx="20" cy="6" rx="4" ry="1.5" fill="#dfe" opacity="0.7"/><circle cx="38" cy="3" r="1" fill="#1a3a6a"/></svg>
<svg class="r" style="left:1197px;top:15px" width="12" height="14" viewBox="0 0 12 14"><text x="6" y="13" text-anchor="middle" font-family="Liberation Sans" font-weight="bold" font-size="14" fill="#fff">?</text></svg>
<svg class="r" style="left:1245px;top:16px" width="16" height="12" viewBox="0 0 16 12"><rect x="0.75" y="0.75" width="14.5" height="10.5" fill="none" stroke="#fff" stroke-width="1.5"/><rect x="0.75" y="0.75" width="14.5" height="2.5" fill="#fff"/><path d="M8 4 l-3 3 h2 v3 h2 v-3 h2z" fill="#fff"/></svg>
<div class="r" style="left:1299px;top:24px;width:11px;height:2px;background:#ffffff;"></div>
<svg class="r" style="left:1349px;top:16px" width="13" height="12" viewBox="0 0 13 12"><rect x="0.9" y="0.9" width="11.2" height="10.2" fill="none" stroke="#fff" stroke-width="1.8"/><rect x="0.9" y="0.9" width="11.2" height="3" fill="#fff"/></svg>
<svg class="r" style="left:1400px;top:16px" width="12" height="12" viewBox="0 0 12 12"><path d="M1 1 L11 11 M11 1 L1 11" stroke="#fff" stroke-width="2.2"/></svg>
<svg class="r" style="left:1376px;top:60px" width="10" height="6" viewBox="0 0 10 6"><path d="M0 0 h10 l-5 5z" fill="#9a8f86"/></svg>
<svg class="r" style="left:1395px;top:45px" width="31" height="31" viewBox="0 0 31 31"><circle cx="15.5" cy="10" r="7.5" fill="#4f7fc0"/><path d="M1 30 Q2 19 9 18 L15.5 21 L22 18 Q29 19 30 30z" fill="#4f7fc0"/></svg>
<svg class="r" style="left:23px;top:97px" width="43" height="44" viewBox="0 0 43 44"><rect x="2" y="5" width="36" height="33" fill="#f8f8f8" stroke="#8a8a8a" stroke-width="2"/><rect x="1" y="4" width="38" height="5" fill="#8a8a8a"/><rect x="7.2" y="9" width="1.6" height="29" fill="#8a8a8a"/><rect x="13.4" y="9" width="1.6" height="29" fill="#8a8a8a"/><rect x="19.6" y="9" width="1.6" height="29" fill="#8a8a8a"/><rect x="25.8" y="9" width="1.6" height="29" fill="#8a8a8a"/><rect x="32.0" y="9" width="1.6" height="29" fill="#8a8a8a"/><rect x="1" y="15.0" width="38" height="1.6" fill="#8a8a8a"/><rect x="1" y="21.0" width="38" height="1.6" fill="#8a8a8a"/><rect x="1" y="27.0" width="38" height="1.6" fill="#8a8a8a"/><rect x="1" y="33.0" width="38" height="1.6" fill="#8a8a8a"/><rect x="6" y="0" width="3.5" height="6" rx="1" fill="#8a8a8a"/><rect x="30" y="0" width="3.5" height="6" rx="1" fill="#8a8a8a"/><rect x="7" y="15" width="10" height="10" fill="none" stroke="#e0604a" stroke-width="3"/><circle cx="30" cy="32" r="9.3" fill="#f1f1f1" stroke="#c0504d" stroke-width="2.8"/><path d="M29.5 26 v6.5 h5" fill="none" stroke="#7a7a7a" stroke-width="2"/></svg>
<svg class="r" style="left:96px;top:104px" width="38" height="27" viewBox="0 0 38 27"><rect x="0" y="0" width="38" height="26" rx="1" fill="#d2d8dd"/><path d="M1 3 L19 17 L37 3" fill="none" stroke="#8a949c" stroke-width="2"/></svg>
<svg class="r" style="left:164px;top:94px" width="48" height="48" viewBox="0 0 48 48"><path d="M5 26 L24 9 L38 9 L38 23 L20 42 Q17 45 14 42 L5 33 Q2 29 5 26Z" fill="#3ab0ee"/><path d="M30 19 Q26 10 31 5 Q37 1 41 7 Q43 13 39 18" fill="none" stroke="#3ab0ee" stroke-width="3"/><circle cx="31" cy="16" r="2.5" fill="#f1f1f1"/></svg>
<svg class="r" style="left:245px;top:100px" width="45" height="36" viewBox="0 0 45 36"><rect x="1" y="1" width="33" height="24" rx="2" fill="#dbe9f4" stroke="#8a8f94" stroke-width="1.5"/><rect x="10" y="10" width="33" height="24" rx="2" fill="#d6e7f5" stroke="#7f8489" stroke-width="1.5"/><rect x="14" y="14" width="11" height="14" fill="#bccfdf" stroke="#9fb2c2"/><circle cx="19.5" cy="20" r="3" fill="#c89e80"/><rect x="28" y="17" width="11" height="2" fill="#7fa6cf"/><rect x="28" y="21" width="11" height="2" fill="#7fa6cf"/></svg>
<svg class="r" style="left:310px;top:96px" width="45" height="43" viewBox="0 0 45 43"><rect x="5" y="1" width="34" height="26" rx="2" fill="#f4f4f4" stroke="#8a8a8a" stroke-width="1.5"/><line x1="10.6" y1="2" x2="10.6" y2="26" stroke="#d8d8d8"/><line x1="6" y1="5.3" x2="38" y2="5.3" stroke="#d8d8d8"/><line x1="16.2" y1="2" x2="16.2" y2="26" stroke="#d8d8d8"/><line x1="6" y1="9.6" x2="38" y2="9.6" stroke="#d8d8d8"/><line x1="21.799999999999997" y1="2" x2="21.799999999999997" y2="26" stroke="#d8d8d8"/><line x1="6" y1="13.899999999999999" x2="38" y2="13.899999999999999" stroke="#d8d8d8"/><line x1="27.4" y1="2" x2="27.4" y2="26" stroke="#d8d8d8"/><line x1="6" y1="18.2" x2="38" y2="18.2" stroke="#d8d8d8"/><line x1="33.0" y1="2" x2="33.0" y2="26" stroke="#d8d8d8"/><line x1="6" y1="22.5" x2="38" y2="22.5" stroke="#d8d8d8"/><path d="M9 22 L15 13 L19 18 L27 9" fill="none" stroke="#5a6a9a" stroke-width="1.5"/><rect x="0" y="24" width="26" height="17" rx="1.5" fill="#3f9a2a" stroke="#2a6a1a"/><rect x="12" y="24" width="2.5" height="17" fill="#e8e8e8"/><path d="M3 30 h20" stroke="#7ac25a" stroke-width="2"/><rect x="30" y="16" width="13" height="25" rx="4" fill="#d7b628" stroke="#a88a10"/><rect x="28" y="27" width="10" height="14" rx="4" fill="#e0c030" stroke="#a88a10"/></svg>
<svg class="r" style="left:384px;top:95px" width="36" height="45" viewBox="0 0 36 45"><path d="M1 1 H34 V38 Q34 43 29 43 H1 Z" fill="#fbfbfb" stroke="#9a9a9a" stroke-width="1.5"/><rect x="5" y="4" width="8" height="1" fill="#aab"/><rect x="22" y="3" width="8" height="1.5" fill="#aab"/><rect x="5" y="8" width="6" height="1" fill="#bbc"/><rect x="22" y="8" width="7" height="1" fill="#bbc"/><rect x="5" y="11" width="6" height="1" fill="#bbc"/><rect x="22" y="11" width="7" height="1" fill="#bbc"/><rect x="5" y="19" width="26" height="16" fill="#f4ecc0"/><line x1="10.2" y1="19" x2="10.2" y2="35" stroke="#d8d0a0"/><line x1="15.4" y1="19" x2="15.4" y2="35" stroke="#d8d0a0"/><line x1="20.6" y1="19" x2="20.6" y2="35" stroke="#d8d0a0"/><line x1="25.8" y1="19" x2="25.8" y2="35" stroke="#d8d0a0"/><line x1="5" y1="23" x2="31" y2="23" stroke="#d8d0a0"/><line x1="5" y1="27" x2="31" y2="27" stroke="#d8d0a0"/><line x1="5" y1="31" x2="31" y2="31" stroke="#d8d0a0"/><rect x="24" y="38" width="6" height="2" fill="#6a6aaa"/></svg>
<svg class="r" style="left:461px;top:95px" width="36" height="45" viewBox="0 0 36 45"><path d="M1 1 H34 V38 Q34 43 29 43 H1 Z" fill="#fbfbfb" stroke="#9a9a9a" stroke-width="1.5"/><rect x="3" y="3" width="8" height="4" fill="#d33"/><rect x="20" y="3" width="9" height="1.5" fill="#bbc"/><text x="18" y="37" text-anchor="middle" font-family="Liberation Sans" font-weight="bold" font-size="42" fill="#118a11">e</text><rect x="24" y="38" width="6" height="2" fill="#6a6aaa"/></svg>
<svg class="r" style="left:536px;top:95px" width="44" height="45" viewBox="0 0 44 45"><path d="M1 1 H34 V38 Q34 43 29 43 H1 Z" fill="#fbfbfb" stroke="#9a9a9a" stroke-width="1.5"/><rect x="5" y="5" width="8" height="1" fill="#bbc"/><rect x="21" y="3" width="8" height="1.5" fill="#bbc"/><rect x="5" y="10" width="6" height="1" fill="#bbc"/><rect x="21" y="10" width="7" height="1" fill="#bbc"/><path d="M5 20 L26 19 L28 30 L6 31 Z" fill="#2c5bd0"/><path d="M26 17 L37 17 Q41 20 42 26 L42 32 L26 32 Z" fill="#f0a830"/><rect x="29" y="19" width="8" height="5" fill="#2a3a5a"/><rect x="5" y="31" width="37" height="4" fill="#333"/><circle cx="12" cy="35" r="3" fill="#222"/><circle cx="35" cy="35" r="3" fill="#222"/></svg>
<svg class="r" style="left:600px;top:98px" width="48" height="38" viewBox="0 0 48 38"><polygon points="3,5 33,2 47,7 47,29 14,36 3,28" fill="#8a8a8a"/><polygon points="3,5 33,2 47,7 17,9" fill="#a8a8a8"/><polygon points="38,7 47,7 47,29 38,33" fill="#767676"/><polygon points="3,5 17,9 14,36 3,28" fill="#959595"/><polygon points="18,13 33,11 33,28 18,31" fill="#141814"/><polygon points="18,24 33,21 33,28 18,31" fill="#5a8a4a"/><polygon points="33,11 40,10 40,32 33,36" fill="#9c9c9c"/><rect x="35" y="21" width="3" height="3" fill="#333"/></svg>
<svg class="r" style="left:662px;top:96px" width="48" height="44" viewBox="0 0 48 44"><polygon points="3,32 25.5,41 46,29 42,27 25.5,36 5,30" fill="#d8dde2" stroke="#a8a8a8" stroke-width="0.8"/><polygon points="5.5,15 25.5,15 25.5,34 5.5,32" fill="#eef2f6"/><polygon points="25.5,15 42,12 42,29 25.5,34" fill="#dce5ee"/><rect x="7" y="16" width="2" height="16" fill="#aabbd0"/><rect x="11" y="16" width="2" height="16" fill="#aabbd0"/><rect x="21" y="16" width="2" height="17" fill="#aabbd0"/><path d="M15.5 33 V24 Q18 20 20.5 24 V33Z" fill="#d09020"/><rect x="29" y="18" width="2.2" height="8" fill="#8aa0b8"/><rect x="36" y="17" width="2.2" height="8" fill="#8aa0b8"/><polygon points="3.5,15 16.3,4.8 27,15" fill="#f4f4f4" stroke="#9a9a9a" stroke-width="0.8"/><polygon points="16.3,4.8 31,3 44,12 25.5,15" fill="#8a8a8a"/><rect x="13" y="9" width="6" height="2" fill="#777"/></svg>
<svg class="r" style="left:727px;top:98px" width="48" height="40" viewBox="0 0 48 40"><path d="M5 5 L19 3 L47 22 L30 38 L6 23 Z" fill="#f4f6f8" stroke="#8a9098" stroke-width="1.3"/><path d="M8 8 L19 6 L42 22" fill="none" stroke="#c8d0d8" stroke-width="1"/><path d="M1 3 L17 0 L20 6 L6 24 Z" fill="#2f7fd0"/><path d="M1 3 L17 0 L18 3 L3 7Z" fill="#6ab0f0"/><path d="M15 30 L46 21 L47 24 L16 32Z" fill="#555"/><path d="M12 31 L16 30 L16 32Z" fill="#333"/></svg>
<svg class="r" style="left:788px;top:95px" width="23" height="22" viewBox="0 0 23 22"><path d="M1 12 L14 1 L22 7 L9 18 Z" fill="#b8bec4" stroke="#7a8086"/><circle cx="16" cy="17" r="4" fill="#9aa0a6" stroke="#6a7076"/></svg>
<svg class="r" style="left:788px;top:129px" width="21" height="23" viewBox="0 0 21 23"><rect x="1" y="1" width="16" height="21" fill="#f2f6fa" stroke="#8a9aaa"/><line x1="2" y1="4" x2="16" y2="4" stroke="#9ab0d0"/><line x1="2" y1="7" x2="16" y2="7" stroke="#9ab0d0"/><line x1="2" y1="10" x2="16" y2="10" stroke="#9ab0d0"/><line x1="2" y1="13" x2="16" y2="13" stroke="#9ab0d0"/><line x1="2" y1="16" x2="16" y2="16" stroke="#9ab0d0"/><line x1="2" y1="19" x2="16" y2="19" stroke="#9ab0d0"/><path d="M12 20 L19 9 L21 11 L14 22Z" fill="#e8b040"/></svg>
<svg class="r" style="left:787px;top:165px" width="23" height="23" viewBox="0 0 23 23"><path d="M1 4 L8 1 H22 V19 L15 22 H1Z" fill="#b5834a"/><path d="M1 4 H15 V22 H1Z" fill="#c7975c"/><line x1="8" y1="4" x2="8" y2="22" stroke="#8a6030"/><line x1="1" y1="13" x2="15" y2="13" stroke="#8a6030"/></svg>
<svg class="r" style="left:944px;top:94px" width="21" height="22" viewBox="0 0 21 22"><path d="M2 17 L10 21 L20 17 L20 8 L10 2 L2 7Z" fill="#8aa0b0"/><path d="M2 17 L10 21 L10 12 L2 8Z" fill="#c05050"/><circle cx="13" cy="14" r="3" fill="#e8e8e8"/><path d="M1 18 L10 22 L21 18" fill="none" stroke="#b03030" stroke-width="1.5"/></svg>
<svg class="r" style="left:943px;top:130px" width="22" height="23" viewBox="0 0 22 23"><path d="M2 7 L18 2 L20 4 L4 9Z" fill="#a8b8c8"/><path d="M8 3 L12 8" stroke="#8090a0" stroke-width="1.5"/><path d="M1 17 L21 15 L19 21 L4 22 Z" fill="#6a6a7a"/><path d="M1 20 L20 19 L19 22 L4 22Z" fill="#a03030"/><path d="M8 15 L12 11 L15 15Z" fill="#555a6a"/></svg>
<svg class="r" style="left:943px;top:166px" width="23" height="21" viewBox="0 0 23 21"><circle cx="6.5" cy="7" r="4.5" fill="#e0b890" stroke="#a08060"/><path d="M0.5 20 Q1 13 6.5 13 Q12 13 12.5 20Z" fill="#f0f0f0" stroke="#9aa0aa"/><circle cx="16" cy="7" r="4.5" fill="#e0b890" stroke="#a08060"/><path d="M10 20 Q10.5 13 16 13 Q21.5 13 22 20Z" fill="#e8a0a8" stroke="#a07080"/></svg>
<svg class="r" style="left:1107px;top:107px" width="23" height="18" viewBox="0 0 23 18"><path d="M5 5 Q5 1 11.5 1 Q18 1 18 5" fill="none" stroke="#222" stroke-width="2"/><path d="M1 8 Q1 5 4 5 H19 Q22 5 22 8 V16 H1Z" fill="#1a1a1a"/><rect x="1" y="10" width="21" height="1" fill="#555"/></svg>
<svg class="r" style="left:1106px;top:152px" width="24" height="25" viewBox="0 0 24 25"><path d="M13 8 L20 2 L23 4 L17 14 Z" fill="#9aa0a6"/><circle cx="9" cy="10" r="5.5" fill="#e4b48a"/><path d="M3.5 9 Q4 3 9 3.5 Q14 4 14 9 Q11 6 6 8Z" fill="#7a3a1a"/><path d="M0.5 24 Q1 16 9 16 Q17 16 17 24Z" fill="#a84520"/><path d="M8 16 L9 22 L10 16Z" fill="#fff"/></svg>
<svg class="r" style="left:1274px;top:95px" width="42" height="44" viewBox="0 0 42 44"><path d="M4 6 L15 1 L24 5 V38 L4 38 Z" fill="#8ab8e0"/><path d="M4 6 L15 1 L15 38 L4 38Z" fill="#b8d8f0"/><rect x="6" y="8" width="8" height="1.5" fill="#5a8ab8"/><rect x="16" y="7" width="6" height="1.5" fill="#4a7aa8"/><rect x="6" y="12" width="8" height="1.5" fill="#5a8ab8"/><rect x="16" y="11" width="6" height="1.5" fill="#4a7aa8"/><rect x="6" y="16" width="8" height="1.5" fill="#5a8ab8"/><rect x="16" y="15" width="6" height="1.5" fill="#4a7aa8"/><rect x="6" y="20" width="8" height="1.5" fill="#5a8ab8"/><rect x="16" y="19" width="6" height="1.5" fill="#4a7aa8"/><rect x="6" y="24" width="8" height="1.5" fill="#5a8ab8"/><rect x="16" y="23" width="6" height="1.5" fill="#4a7aa8"/><rect x="6" y="28" width="8" height="1.5" fill="#5a8ab8"/><rect x="16" y="27" width="6" height="1.5" fill="#4a7aa8"/><rect x="6" y="32" width="8" height="1.5" fill="#5a8ab8"/><rect x="16" y="31" width="6" height="1.5" fill="#4a7aa8"/><path d="M14 25 L30 22 L40 27 V40 L24 43 L14 38Z" fill="#a8cce8"/><path d="M14 28 L24 30 L40 27 V40 L24 43 L14 38Z" fill="#6a9ac8"/><rect x="17" y="31" width="6" height="2" fill="#dff"/><rect x="26" y="31" width="10" height="2" fill="#cde"/></svg>
<svg class="r" style="left:1409px;top:204px" width="12" height="8" viewBox="0 0 12 8"><path d="M1 7 L6 2 L11 7" fill="none" stroke="#666" stroke-width="2.2"/></svg>
<svg class="r" style="left:261px;top:179px" width="10" height="5" viewBox="0 0 10 5"><path d="M0 0 H10 L5 5Z" fill="#555"/></svg>
<svg class="r" style="left:326px;top:179px" width="10" height="5" viewBox="0 0 10 5"><path d="M0 0 H10 L5 5Z" fill="#555"/></svg>
<svg class="r" style="left:396px;top:179px" width="10" height="5" viewBox="0 0 10 5"><path d="M0 0 H10 L5 5Z" fill="#555"/></svg>
<svg class="r" style="left:473px;top:179px" width="10" height="5" viewBox="0 0 10 5"><path d="M0 0 H10 L5 5Z" fill="#555"/></svg>
<svg class="r" style="left:552px;top:179px" width="10" height="5" viewBox="0 0 10 5"><path d="M0 0 H10 L5 5Z" fill="#555"/></svg>
<svg class="r" style="left:619px;top:179px" width="10" height="5" viewBox="0 0 10 5"><path d="M0 0 H10 L5 5Z" fill="#555"/></svg>
<svg class="r" style="left:682px;top:179px" width="10" height="5" viewBox="0 0 10 5"><path d="M0 0 H10 L5 5Z" fill="#555"/></svg>
<svg class="r" style="left:746px;top:179px" width="10" height="5" viewBox="0 0 10 5"><path d="M0 0 H10 L5 5Z" fill="#555"/></svg>
<svg class="r" style="left:1289px;top:179px" width="10" height="5" viewBox="0 0 10 5"><path d="M0 0 H10 L5 5Z" fill="#555"/></svg>
<svg class="r" style="left:866px;top:102px" width="10" height="5" viewBox="0 0 10 5"><path d="M0 0 H10 L5 5Z" fill="#555"/></svg>
<svg class="r" style="left:914px;top:138px" width="10" height="5" viewBox="0 0 10 5"><path d="M0 0 H10 L5 5Z" fill="#555"/></svg>
<svg class="r" style="left:855px;top:174px" width="10" height="5" viewBox="0 0 10 5"><path d="M0 0 H10 L5 5Z" fill="#555"/></svg>
<svg class="r" style="left:1031px;top:102px" width="10" height="5" viewBox="0 0 10 5"><path d="M0 0 H10 L5 5Z" fill="#555"/></svg>
<svg class="r" style="left:1086px;top:138px" width="10" height="5" viewBox="0 0 10 5"><path d="M0 0 H10 L5 5Z" fill="#555"/></svg>
<svg class="r" style="left:1008px;top:174px" width="10" height="5" viewBox="0 0 10 5"><path d="M0 0 H10 L5 5Z" fill="#555"/></svg>
<svg class="r" style="left:1193px;top:114px" width="10" height="5" viewBox="0 0 10 5"><path d="M0 0 H10 L5 5Z" fill="#555"/></svg>
<svg class="r" style="left:1230px;top:162px" width="10" height="5" viewBox="0 0 10 5"><path d="M0 0 H10 L5 5Z" fill="#555"/></svg>
<svg class="r" style="left:11px;top:230px" width="24" height="24" viewBox="0 0 24 24"><circle cx="12" cy="12" r="10.5" fill="none" stroke="#5a8ac0" stroke-width="1.8"/><path d="M6 12 L11 7 M6 12 L11 17 M6 12 H18" fill="none" stroke="#4a7ab8" stroke-width="3"/></svg>
<svg class="r" style="left:1404px;top:230px" width="24" height="22" viewBox="0 0 24 22"><path d="M2 11 L12 2 L22 11" fill="none" stroke="#333" stroke-width="2.2"/><rect x="18" y="3" width="2.5" height="5" fill="#eee" stroke="#777" stroke-width="0.8"/><path d="M5 10 L12 4 L19 10 V19 H5Z" fill="#f2f2f2" stroke="#bbb" stroke-width="0.6"/><rect x="10" y="12" width="4" height="7" fill="#d99a40"/><rect x="4" y="19" width="16" height="2" fill="#444"/></svg>
<svg class="r" style="left:9px;top:268px" width="26" height="30" viewBox="0 0 26 30"><circle cx="10" cy="10" r="8.5" fill="#f4f4f4" stroke="#9a9a9a" stroke-width="1.6"/><path d="M16 17 L23 26" stroke="#8a8a8a" stroke-width="3.5" stroke-linecap="round"/></svg>
<svg class="r" style="left:14px;top:349px" width="21" height="24" viewBox="0 0 21 24"><path d="M1 1 H13 L19 7 V22 H1 Z" fill="#fff" stroke="#8a8a8a" stroke-width="1.2"/><path d="M13 1 V7 H19" fill="none" stroke="#8a8a8a" stroke-width="1.2"/></svg>
<svg class="r" style="left:12px;top:383px" width="24" height="24" viewBox="0 0 24 24"><path d="M1 1 H21 L23 3 V23 H1 Z" fill="#9068b8"/><rect x="6" y="1" width="11" height="8" fill="#ffffff"/><rect x="11" y="2.5" width="3.5" height="5" fill="#9068b8"/><rect x="4" y="12" width="16" height="8.5" fill="#ffffff"/></svg>
<svg class="r" style="left:12px;top:416px" width="26" height="26" viewBox="0 0 26 26"><path d="M4 1 H25 V23" fill="none" stroke="#a888d0" stroke-width="2"/><g transform="translate(0,2)"><path d="M1 1 H21 L23 3 V23 H1 Z" fill="#9068b8"/><rect x="6" y="1" width="11" height="8" fill="#ffffff"/><rect x="11" y="2.5" width="3.5" height="5" fill="#9068b8"/><rect x="4" y="12" width="16" height="8.5" fill="#ffffff"/></g></svg>
<svg class="r" style="left:14px;top:455px" width="21" height="21" viewBox="0 0 21 21"><path d="M2 2 L19 19 M19 2 L2 19" stroke="#e0603c" stroke-width="3"/></svg>
<svg class="r" style="left:11px;top:487px" width="26" height="26" viewBox="0 0 26 26"><rect x="6" y="1" width="13" height="8" fill="#fff" stroke="#8a8a8a"/><rect x="1" y="8" width="24" height="11" rx="2" fill="#8a9098"/><rect x="6" y="14" width="13" height="10" fill="#fff" stroke="#8a8a8a"/><rect x="8" y="17" width="9" height="1.4" fill="#4a80c0"/><rect x="8" y="20" width="9" height="1.4" fill="#4a80c0"/></svg>
<svg class="r" style="left:11px;top:522px" width="26" height="26" viewBox="0 0 26 26"><rect x="6" y="1" width="13" height="8" fill="#fff" stroke="#8a8a8a"/><rect x="1" y="8" width="24" height="11" rx="2" fill="#8a9098"/><rect x="6" y="14" width="13" height="10" fill="#fff" stroke="#8a8a8a"/><rect x="8" y="17" width="9" height="1.4" fill="#4a80c0"/><rect x="8" y="20" width="9" height="1.4" fill="#4a80c0"/></svg>
<div class="r" style="left:14px;top:567px;width:20px;height:4px;background:#e06a50;"></div>
<svg class="r" style="left:12px;top:590px" width="26" height="30" viewBox="0 0 26 30"><rect x="1" y="3" width="23" height="25" rx="1" fill="#fff" stroke="#c04040"/><rect x="1" y="3" width="23" height="7" fill="#d83a2a"/><rect x="4" y="12" width="3" height="2.5" fill="#e07060"/><rect x="4" y="16" width="3" height="2.5" fill="#e07060"/><rect x="4" y="20" width="3" height="2.5" fill="#e07060"/><rect x="9" y="12" width="3" height="2.5" fill="#e07060"/><rect x="9" y="16" width="3" height="2.5" fill="#e07060"/><rect x="9" y="20" width="3" height="2.5" fill="#e07060"/><rect x="14" y="12" width="3" height="2.5" fill="#e07060"/><rect x="14" y="16" width="3" height="2.5" fill="#e07060"/><rect x="14" y="20" width="3" height="2.5" fill="#e07060"/><rect x="19" y="12" width="3" height="2.5" fill="#e07060"/><rect x="19" y="16" width="3" height="2.5" fill="#e07060"/><rect x="19" y="20" width="3" height="2.5" fill="#e07060"/><path d="M17 21 h6 v8 h-6z" fill="#f0a040"/></svg>
<svg class="r" style="left:14px;top:652px" width="21" height="20" viewBox="0 0 21 20"><path d="M1 6 H11 V1 L20 10 L11 19 V14 H1 Z" fill="#7ac060" stroke="#5a9a40" stroke-width="0.8"/></svg>
<svg class="r" style="left:11px;top:682px" width="27" height="31" viewBox="0 0 27 31"><path d="M14 4 L26 1" stroke="#555" stroke-width="2"/><path d="M3 10 L25 6 L23 22 L6 24 Z" fill="#b0b8c0" stroke="#7a8088"/><line x1="6" y1="9.0" x2="7.0" y2="23.0" stroke="#8a9098"/><line x1="10" y1="8.4" x2="10.5" y2="22.7" stroke="#8a9098"/><line x1="14" y1="7.8" x2="14.0" y2="22.4" stroke="#8a9098"/><line x1="18" y1="7.2" x2="17.5" y2="22.1" stroke="#8a9098"/><line x1="22" y1="6.6" x2="21.0" y2="21.8" stroke="#8a9098"/><circle cx="8" cy="27" r="3" fill="#555"/><circle cx="22" cy="26" r="3" fill="#555"/></svg>
<svg class="r" style="left:10px;top:718px" width="29" height="29" viewBox="0 0 29 29"><path d="M2 5 L12 1 H27 V22 L17 26 H2Z" fill="#a87840"/><path d="M2 5 H17 V26 H2Z" fill="#c89858"/><path d="M17 5 L27 1" stroke="#e0b880"/><line x1="9" y1="5" x2="9" y2="26" stroke="#8a5a28"/><line x1="2" y1="15" x2="17" y2="15" stroke="#8a5a28"/><rect x="1" y="25" width="18" height="3" fill="#6a4a28"/></svg>
<svg class="r" style="left:10px;top:752px" width="29" height="30" viewBox="0 0 29 30"><rect x="11" y="1" width="16" height="20" fill="#dff0f8" stroke="#4aa0d0" stroke-width="1.2"/><rect x="14" y="5" width="10" height="1.3" fill="#4a90c0"/><rect x="14" y="9" width="10" height="1.3" fill="#4a90c0"/><rect x="14" y="13" width="10" height="1.3" fill="#4a90c0"/><circle cx="9" cy="11" r="5" fill="#e8b890"/><path d="M4 9 Q4 4 9 4.5 Q14 4 14 9 Q11 7 4 9Z" fill="#7a4a20"/><path d="M0.5 28 Q1 18 9 18 Q17 18 17.5 28Z" fill="#555a60"/><path d="M8 18 L9 24 L10 18Z" fill="#fff"/></svg>
<svg class="r" style="left:10px;top:786px" width="29" height="30" viewBox="0 0 29 30"><rect x="11" y="1" width="16" height="18" fill="#dff0f8" stroke="#4aa0d0" stroke-width="1.2"/><rect x="14" y="5" width="10" height="1.3" fill="#4a90c0"/><rect x="14" y="9" width="10" height="1.3" fill="#4a90c0"/><circle cx="9" cy="11" r="5" fill="#e8b890"/><path d="M4 9 Q4 4 9 4.5 Q14 4 14 9 Q11 7 4 9Z" fill="#7a4a20"/><path d="M0.5 28 Q1 18 9 18 Q17 18 17.5 28Z" fill="#555a60"/><path d="M8 18 L9 24 L10 18Z" fill="#fff"/><rect x="14" y="18" width="14" height="11" rx="1.5" fill="#c0702a" stroke="#8a4a1a"/><rect x="18" y="16" width="6" height="3" fill="none" stroke="#8a4a1a"/></svg>
<svg class="r" style="left:10px;top:823px" width="29" height="27" viewBox="0 0 29 27"><rect x="2" y="10" width="16" height="10" rx="5" transform="rotate(-40 10 15)" fill="none" stroke="#b0b4b8" stroke-width="4"/><rect x="11" y="7" width="16" height="10" rx="5" transform="rotate(-40 19 12)" fill="none" stroke="#c8ccd0" stroke-width="4"/></svg>
<svg class="r" style="left:10px;top:857px" width="29" height="30" viewBox="0 0 29 30"><path d="M1 4 L12 1 V29 L1 26Z" fill="#2a8a3a"/><rect x="11" y="4" width="17" height="22" fill="#f0f8f0" stroke="#3a9a4a"/><rect x="13" y="7" width="13" height="1" fill="#8acb8a"/><rect x="13" y="11" width="13" height="1" fill="#8acb8a"/><rect x="13" y="15" width="13" height="1" fill="#8acb8a"/><rect x="13" y="19" width="13" height="1" fill="#8acb8a"/><rect x="13" y="23" width="13" height="1" fill="#8acb8a"/><text x="6.5" y="20" text-anchor="middle" font-family="Liberation Sans" font-weight="bold" font-size="11" fill="#fff">X</text><path d="M1 4 L12 1 V5 L1 8Z" fill="#7ad07a"/></svg>
<svg class="r" style="left:10px;top:897px" width="30" height="23" viewBox="0 0 30 23"><path d="M3 1 H22 L29 8 V20 Q29 22 27 22 H3 Q1 22 1 20 V3 Q1 1 3 1Z" fill="#fff" stroke="#333" stroke-width="1.3"/><rect x="5.0" y="6" width="1" height="11" fill="#222"/><rect x="7.6" y="6" width="1.6" height="11" fill="#222"/><rect x="10.2" y="6" width="1" height="11" fill="#222"/><rect x="12.8" y="6" width="1.6" height="11" fill="#222"/><rect x="15.4" y="6" width="1" height="11" fill="#222"/><rect x="18.0" y="6" width="1.6" height="11" fill="#222"/><rect x="20.6" y="6" width="1" height="11" fill="#222"/><rect x="23.2" y="6" width="1.6" height="11" fill="#222"/></svg>
<svg class="r" style="left:98px;top:974px" width="12" height="8" viewBox="0 0 12 8"><path d="M1.5 1.5 L6 6 L10.5 1.5" fill="none" stroke="#777" stroke-width="2.2"/></svg>
<svg class="r" style="left:147px;top:966px" width="25" height="25" viewBox="0 0 25 25"><circle cx="9" cy="9" r="8" fill="#f0c0a0" stroke="#d08050" stroke-width="1.5"/><text x="9" y="13" text-anchor="middle" font-family="Liberation Sans" font-weight="bold" font-size="10" fill="#c06030">€</text><circle cx="16" cy="16" r="8" fill="#5ab848" stroke="#3a8a30" stroke-width="1.5"/><text x="16" y="20.5" text-anchor="middle" font-family="Liberation Sans" font-weight="bold" font-size="11" fill="#fff">$</text></svg>
<svg class="r" style="left:373px;top:279px" width="21" height="22" viewBox="0 0 21 22"><rect x="1" y="1" width="17" height="20" fill="#fafafa" stroke="#a0a0a0"/><rect x="3" y="11" width="13" height="7" fill="#efe6b0"/><rect x="3" y="4" width="5" height="1" fill="#aab"/><rect x="11" y="4" width="5" height="1" fill="#aab"/></svg>
<svg class="r" style="left:545px;top:279px" width="14" height="21" viewBox="0 0 14 21"><path d="M1 1 H9 L13 5 V20 H1 Z" fill="#fff" stroke="#888"/><path d="M9 1 V5 H13" fill="none" stroke="#888"/></svg>
<svg class="r" style="left:481px;top:315px" width="16" height="17" viewBox="0 0 16 17"><circle cx="8" cy="5" r="3.5" fill="#8ab8a0"/><path d="M2 16 Q2 9 8 9 Q14 9 14 16Z" fill="#8ab8a0"/></svg>
<svg class="r" style="left:1115px;top:279px" width="20" height="22" viewBox="0 0 20 22"><path d="M8.5 2.5 V15 Q8.5 19 12.5 18.5 Q16.5 17.5 16.5 11.5" fill="none" stroke="#1a1a1a" stroke-width="2.7" stroke-linecap="round"/><path d="M3.5 5 H8.5 M3 11 L13.5 7.5" stroke="#1a1a1a" stroke-width="2.4" stroke-linecap="round"/></svg>
<svg class="r" style="left:1112px;top:308px" width="23" height="17" viewBox="0 0 23 17"><rect x="0" y="0" width="23" height="17" fill="#1c2a88"/><rect x="0" y="0" width="23" height="6" fill="#2a3aa0" opacity="0.6"/><circle cx="11.5" cy="8.5" r="4.5" fill="none" stroke="#c8b840" stroke-width="0.9" stroke-dasharray="1 1.3"/></svg>
<svg class="r" style="left:1112px;top:335px" width="23" height="17" viewBox="0 0 23 17"><rect x="0" y="0" width="23" height="17" fill="#1c2a88"/><rect x="0" y="0" width="23" height="6" fill="#2a3aa0" opacity="0.6"/><circle cx="11.5" cy="8.5" r="4.5" fill="none" stroke="#c8b840" stroke-width="0.9" stroke-dasharray="1 1.3"/></svg>
<svg class="r" style="left:1296px;top:309px" width="18" height="16" viewBox="0 0 18 16"><path d="M13 5 A5.5 5.5 0 1 0 13.5 11" fill="none" stroke="#6aae90" stroke-width="2.6"/><path d="M10 2 L15 5 L11 9Z" fill="#6aae90"/><path d="M12 8 h5 l-2.5 3z" fill="#6aae90"/></svg>
<svg class="r" style="left:1296px;top:336px" width="18" height="16" viewBox="0 0 18 16"><path d="M13 5 A5.5 5.5 0 1 0 13.5 11" fill="none" stroke="#6aae90" stroke-width="2.6"/><path d="M10 2 L15 5 L11 9Z" fill="#6aae90"/><path d="M12 8 h5 l-2.5 3z" fill="#6aae90"/></svg>
<svg class="r" style="left:1112px;top:420px" width="24" height="23" viewBox="0 0 24 23"><g transform="rotate(-28 12 11)"><path d="M12 2 Q18 3 18 11 L20 17 H4 L6 11 Q6 3 12 2Z" fill="#dcdcdc" stroke="#8a8a8a"/><path d="M8 6 Q9 4 11 4 V15 H7Z" fill="#fafafa" opacity="0.8"/><circle cx="12" cy="19" r="2.2" fill="#888"/></g></svg>
<svg class="r" style="left:307px;top:469px" width="22" height="24" viewBox="0 0 22 24"><rect x="1" y="2" width="16" height="21" fill="#f4f6f8" stroke="#9aa4ae"/><line x1="3" y1="6" x2="15" y2="6" stroke="#aab8c8"/><line x1="3" y1="9" x2="15" y2="9" stroke="#aab8c8"/><line x1="3" y1="12" x2="15" y2="12" stroke="#aab8c8"/><line x1="3" y1="15" x2="15" y2="15" stroke="#aab8c8"/><line x1="3" y1="18" x2="15" y2="18" stroke="#aab8c8"/><path d="M13 21 L20 11 L22 13 L15 23Z" fill="#e8a838"/><rect x="4" y="3" width="10" height="2" fill="#8aa"/></svg>
<svg class="r" style="left:450px;top:471px" width="24" height="21" viewBox="0 0 24 21"><ellipse cx="12" cy="9" rx="11" ry="8.5" fill="#2a6ad8"/><ellipse cx="12" cy="6" rx="8" ry="4" fill="#7ab0f0" opacity="0.6"/><path d="M5 15 L4 20 L10 16Z" fill="#2a6ad8"/><text x="12" y="14" text-anchor="middle" font-family="Liberation Serif" font-style="italic" font-weight="bold" font-size="13" fill="#fff">i</text></svg>
<svg class="r" style="left:609px;top:469px" width="25" height="25" viewBox="0 0 25 25"><rect x="1" y="1" width="17" height="22" fill="#f6f6f6" stroke="#9a9a9a"/><rect x="3" y="4" width="6" height="1" fill="#aab"/><rect x="11" y="4" width="5" height="1" fill="#aab"/><rect x="3" y="7" width="5" height="1" fill="#bbc"/><path d="M3 13 L15 12 L16 18 L4 19Z" fill="#2a50c0"/><path d="M15 11 h5 q4 2 4 7 v2 h-9z" fill="#f0a030"/><rect x="17" y="13" width="4" height="3" fill="#333"/><rect x="3" y="18" width="21" height="2.5" fill="#333"/><circle cx="7" cy="21" r="2" fill="#222"/><circle cx="20" cy="21" r="2" fill="#222"/></svg>
<svg class="r" style="left:312px;top:740px" width="26" height="22" viewBox="0 0 26 22"><path d="M2 14 L8 8 H22 L25 14 V19 Q25 21 23 21 H4 Q2 21 2 19Z" fill="#a8b8c8" stroke="#7a8a9a"/><rect x="10" y="2" width="10" height="8" fill="#f8f8e8" stroke="#999"/><path d="M6 12 H21 L22 14 H5Z" fill="#e0d070"/></svg>
<svg class="r" style="left:415px;top:742px" width="23" height="23" viewBox="0 0 23 23"><rect x="0.5" y="0.5" width="22" height="22" rx="3" fill="#6a6a6a" stroke="#444"/><rect x="2" y="2" width="19" height="10" rx="2" fill="#8a8a8a"/><text x="11.5" y="17" text-anchor="middle" font-family="Liberation Sans" font-weight="bold" font-size="15" fill="#111">%</text></svg>
<svg class="r" style="left:555px;top:740px" width="24" height="25" viewBox="0 0 24 25"><path d="M2 6 L20 1 L22 3 L5 9Z" fill="#a8b8c8"/><path d="M9 2 L14 8" stroke="#8090a0" stroke-width="1.5"/><path d="M1 17 L22 15 L20 22 L5 23 Z" fill="#6a6a7a"/><path d="M1 20 L21 19 L20 23 L5 23Z" fill="#a03030"/><path d="M8 15 L13 10 L16 15Z" fill="#555a6a"/></svg>
<svg class="r" style="left:878px;top:740px" width="24" height="24" viewBox="0 0 24 24"><rect x="1" y="1" width="22" height="22" fill="#e8f0f8" stroke="#7a9ab8"/><rect x="3" y="3" width="18" height="18" fill="#f8fbff" stroke="#aac0d8" stroke-width="0.6"/><text x="12" y="17" text-anchor="middle" font-family="Liberation Serif" font-weight="bold" font-size="15" fill="#333">Σ</text></svg>
<svg class="r" style="left:305px;top:522px" width="10" height="10" viewBox="0 0 10 10"><path d="M5 1 V9 M1 5 H9 M2 2 L8 8 M8 2 L2 8" stroke="#9a9a9a" stroke-width="1.3"/></svg>
<svg class="r" style="left:307px;top:582px" width="6" height="10" viewBox="0 0 6 10"><path d="M1 0 L6 5 L1 10Z" fill="#666"/></svg>
<svg class="r" style="left:963px;top:554px" width="23" height="17" viewBox="0 0 23 17"><rect x="0" y="0" width="23" height="17" rx="1" fill="#e01818"/><rect x="0" y="0" width="23" height="7" fill="#f06060" opacity="0.5"/><circle cx="8" cy="8.5" r="4.5" fill="#fff"/><circle cx="9.3" cy="8.5" r="3.6" fill="#e01818"/><circle cx="13" cy="8.5" r="1.6" fill="#fff"/></svg>
<svg class="r" style="left:963px;top:579px" width="23" height="17" viewBox="0 0 23 17"><rect x="0" y="0" width="23" height="17" rx="1" fill="#e01818"/><rect x="0" y="0" width="23" height="7" fill="#f06060" opacity="0.5"/><circle cx="8" cy="8.5" r="4.5" fill="#fff"/><circle cx="9.3" cy="8.5" r="3.6" fill="#e01818"/><circle cx="13" cy="8.5" r="1.6" fill="#fff"/></svg>
<svg class="r" style="left:296.5px;top:960px" width="22" height="22" viewBox="0 0 22 22"><circle cx="11" cy="11" r="10" fill="none" stroke="#6a8ab8" stroke-width="1.4"/><path d="M7 11 L11.5 6.5 M7 11 L11.5 15.5 M7 11 H16" fill="none" stroke="#4a7ab8" stroke-width="3"/></svg>
<svg class="r" style="left:326.5px;top:960px" width="22" height="22" viewBox="0 0 22 22"><circle cx="11" cy="11" r="10" fill="none" stroke="#6a8ab8" stroke-width="1.4"/><path d="M15 11 L10.5 6.5 M15 11 L10.5 15.5 M15 11 H6" fill="none" stroke="#4a7ab8" stroke-width="3"/></svg>
<svg class="r" style="left:357px;top:960px" width="24" height="22" viewBox="0 0 24 22"><path d="M2 6 L12 2 L22 12 L12 20 Z" fill="#7ac0e8" stroke="#4a90c0"/><path d="M4 12 L14 16 L20 10" fill="none" stroke="#fff" stroke-width="1.2"/></svg>
<svg class="r" style="left:650px;top:958px" width="24" height="24" viewBox="0 0 24 24"><rect x="1" y="11" width="21" height="9" rx="2" fill="#5a7ab8"/><rect x="5" y="17" width="13" height="6" fill="#fff" stroke="#777"/><circle cx="16" cy="8" r="6.5" fill="#5ab848"/><text x="16" y="12" text-anchor="middle" font-family="Liberation Sans" font-weight="bold" font-size="10" fill="#222">?</text></svg>
<svg class="r" style="left:692px;top:957px" width="25" height="26" viewBox="0 0 25 26"><circle cx="10" cy="6" r="5" fill="#8a8a8a"/><path d="M1 22 Q2 12 10 12 Q18 12 19 22Z" fill="#9a9a9a"/><path d="M13 20 Q14 14 20 15 L19 12 L24 17 L19 21 L20 18 Q16 17 15 22Z" fill="#3a8ad0"/></svg>
<svg class="r" style="left:1281px;top:959px" width="22" height="25" viewBox="0 0 22 25"><rect x="8" y="0" width="5" height="3" fill="#777"/><circle cx="10.5" cy="14" r="9.5" fill="#f0f0f0" stroke="#666" stroke-width="1.6"/><path d="M10.5 8 V14 L7 17" fill="none" stroke="#a33" stroke-width="1.2"/><path d="M17 5 L20 3" stroke="#777" stroke-width="2"/></svg>
</body></html>
